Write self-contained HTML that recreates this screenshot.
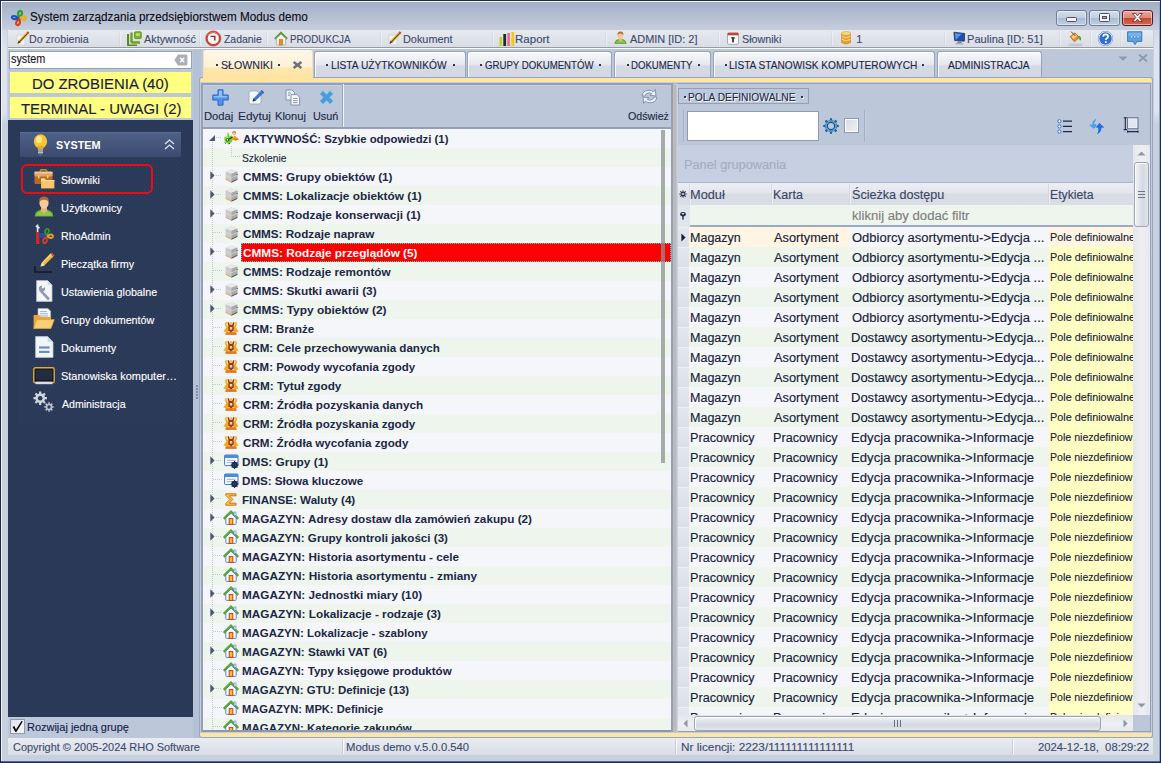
<!DOCTYPE html>
<html><head><meta charset="utf-8"><title>Modus demo</title>
<style>
html,body{margin:0;padding:0}
body{width:1161px;height:763px;position:relative;overflow:hidden;background:#c4cddc;font-family:"Liberation Sans", sans-serif;font-size:11px}
div,span,svg{box-sizing:border-box}
span{-webkit-text-stroke:0.12px}
</style></head><body>
<div style="position:absolute;left:0px;top:0px;width:1161px;height:763px;background:#1d2b4a"></div>
<div style="position:absolute;left:1px;top:1px;width:1159px;height:760px;background:#c8d0de"></div>
<div style="position:absolute;left:1px;top:1px;width:1159px;height:1px;background:#f4f6fa"></div>
<div style="position:absolute;left:1px;top:1px;width:1px;height:760px;background:#f4f6fa"></div>
<div style="position:absolute;left:2px;top:2px;width:1158px;height:759px;background:#c8d0de"></div>
<div style="position:absolute;left:1159px;top:2px;width:1px;height:759px;background:#93a3c2"></div>
<div style="position:absolute;left:2px;top:2px;width:1157px;height:28px;background:linear-gradient(#a3afc7,#c6cfdd)"></div>
<div style="position:absolute;left:8px;top:49px;width:1145px;height:689px;background:#bcc8da"></div>
<div style="position:absolute;left:2px;top:30px;width:5px;height:95px;background:linear-gradient(#d4dae5,#dfe3ec 20%,#dfe3ec 85%,#c9d0de)"></div>
<div style="position:absolute;left:1154px;top:30px;width:5px;height:95px;background:linear-gradient(#d4dae5,#dfe3ec 20%,#dfe3ec 85%,#c9d0de)"></div>
<svg style="position:absolute;left:10px;top:9px;" width="18" height="18" viewBox="0 0 18 18">
<g fill="none" stroke-width="2.2" stroke-linecap="round">
<path d="M9 8 C6 2 12 0 12 4 C12 7 9 8 9 8" stroke="#2f9a2f"/>
<path d="M10 9 C16 5 18 11 14 11 C12 11 10 9 10 9" stroke="#e8b020"/>
<path d="M9 10 C12 16 6 18 6 14 C6 12 9 10 9 10" stroke="#d8401c"/>
<path d="M8 9 C2 12 0 7 4 7 C6 7 8 9 8 9" stroke="#2050c0"/>
</g></svg>
<span style="position:absolute;left:29.51px;top:10px;height:14px;line-height:14px;font-size:12px;color:#0a0a14;white-space:pre;display:inline-block;transform-origin:0 0;transform:scaleX(0.9779);">System zarządzania przedsiębiorstwem Modus demo</span>
<div style="position:absolute;left:1056px;top:10px;width:31px;height:16px;border:1px solid #6e7c97;border-radius:3px;background:linear-gradient(#d3deeb 0%,#c2d0e2 48%,#a9bcd4 52%,#c1d0e2 100%);box-shadow:inset 0 0 0 1px rgba(255,255,255,.45)"></div>
<div style="position:absolute;left:1089px;top:10px;width:31px;height:16px;border:1px solid #6e7c97;border-radius:3px;background:linear-gradient(#d3deeb 0%,#c2d0e2 48%,#a9bcd4 52%,#c1d0e2 100%);box-shadow:inset 0 0 0 1px rgba(255,255,255,.45)"></div>
<div style="position:absolute;left:1122px;top:10px;width:31px;height:16px;border:1px solid #5e1522;border-radius:3px;background:linear-gradient(#e9a79b 0%,#dc8a7b 48%,#c8452b 52%,#d26a50 100%);box-shadow:inset 0 0 0 1px rgba(255,255,255,.45)"></div>
<div style="position:absolute;left:1066px;top:17px;width:11px;height:5px;background:#f4f4f4;border:1px solid #4a4f66;border-radius:1.5px"></div>
<div style="position:absolute;left:1099px;top:13px;width:11px;height:9px;background:#f4f4f4;border:1px solid #4a4f66;border-radius:1.5px"></div>
<div style="position:absolute;left:1102px;top:16px;width:5px;height:3px;background:#9fb2cc;border:1px solid #4a4f66"></div>
<svg style="position:absolute;left:1131px;top:12px;" width="13" height="11" viewBox="0 0 13 11"><path d="M1.5 1.5 L4.6 1.5 L6.5 3.8 L8.4 1.5 L11.5 1.5 L8.2 5.5 L11.5 9.5 L8.4 9.5 L6.5 7.2 L4.6 9.5 L1.5 9.5 L4.8 5.5 Z" fill="#f6f6f6" stroke="#6a3a3a" stroke-width="0.9"/></svg>
<div style="position:absolute;left:8px;top:30px;width:1145px;height:17px;background:linear-gradient(#e6e9ee,#d9dde6)"></div>
<div style="position:absolute;left:8px;top:47px;width:1145px;height:1px;background:#9a9a9a"></div>
<div style="position:absolute;left:8px;top:48px;width:1145px;height:1px;background:#fbfbfc"></div>
<div style="position:absolute;left:120px;top:31px;width:1px;height:15px;background:rgba(255,255,255,.38)"></div>
<div style="position:absolute;left:119px;top:31px;width:1px;height:15px;background:rgba(180,188,204,.22)"></div>
<div style="position:absolute;left:200px;top:31px;width:1px;height:15px;background:rgba(255,255,255,.38)"></div>
<div style="position:absolute;left:199px;top:31px;width:1px;height:15px;background:rgba(180,188,204,.22)"></div>
<div style="position:absolute;left:267px;top:31px;width:1px;height:15px;background:rgba(255,255,255,.38)"></div>
<div style="position:absolute;left:266px;top:31px;width:1px;height:15px;background:rgba(180,188,204,.22)"></div>
<div style="position:absolute;left:381px;top:31px;width:1px;height:15px;background:rgba(255,255,255,.38)"></div>
<div style="position:absolute;left:380px;top:31px;width:1px;height:15px;background:rgba(180,188,204,.22)"></div>
<div style="position:absolute;left:493px;top:31px;width:1px;height:15px;background:rgba(255,255,255,.38)"></div>
<div style="position:absolute;left:492px;top:31px;width:1px;height:15px;background:rgba(180,188,204,.22)"></div>
<div style="position:absolute;left:606px;top:31px;width:1px;height:15px;background:rgba(255,255,255,.38)"></div>
<div style="position:absolute;left:605px;top:31px;width:1px;height:15px;background:rgba(180,188,204,.22)"></div>
<div style="position:absolute;left:719px;top:31px;width:1px;height:15px;background:rgba(255,255,255,.38)"></div>
<div style="position:absolute;left:718px;top:31px;width:1px;height:15px;background:rgba(180,188,204,.22)"></div>
<div style="position:absolute;left:832px;top:31px;width:1px;height:15px;background:rgba(255,255,255,.38)"></div>
<div style="position:absolute;left:831px;top:31px;width:1px;height:15px;background:rgba(180,188,204,.22)"></div>
<div style="position:absolute;left:945px;top:31px;width:1px;height:15px;background:rgba(255,255,255,.38)"></div>
<div style="position:absolute;left:944px;top:31px;width:1px;height:15px;background:rgba(180,188,204,.22)"></div>
<div style="position:absolute;left:1060px;top:31px;width:1px;height:15px;background:rgba(255,255,255,.38)"></div>
<div style="position:absolute;left:1059px;top:31px;width:1px;height:15px;background:rgba(180,188,204,.22)"></div>
<div style="position:absolute;left:1091px;top:31px;width:1px;height:15px;background:rgba(255,255,255,.38)"></div>
<div style="position:absolute;left:1090px;top:31px;width:1px;height:15px;background:rgba(180,188,204,.22)"></div>
<div style="position:absolute;left:1121px;top:31px;width:1px;height:15px;background:rgba(255,255,255,.38)"></div>
<div style="position:absolute;left:1120px;top:31px;width:1px;height:15px;background:rgba(180,188,204,.22)"></div>
<span style="position:absolute;left:29.04px;top:33px;height:12px;line-height:12px;font-size:11px;color:#3d4a6c;white-space:pre;display:inline-block;transform-origin:0 0;transform:scaleX(0.9646);">Do zrobienia</span>
<span style="position:absolute;left:143.5px;top:33px;height:12px;line-height:12px;font-size:11px;color:#3d4a6c;white-space:pre;display:inline-block;transform-origin:0 0;transform:scaleX(0.9856);">Aktywność</span>
<span style="position:absolute;left:223.76px;top:33px;height:12px;line-height:12px;font-size:11px;color:#3d4a6c;white-space:pre;display:inline-block;transform-origin:0 0;transform:scaleX(0.9487);">Zadanie</span>
<span style="position:absolute;left:289.61px;top:33px;height:12px;line-height:12px;font-size:11px;color:#3d4a6c;white-space:pre;display:inline-block;transform-origin:0 0;transform:scaleX(0.8914);">PRODUKCJA</span>
<span style="position:absolute;left:402.51px;top:33px;height:12px;line-height:12px;font-size:11px;color:#3d4a6c;white-space:pre;display:inline-block;transform-origin:0 0;transform:scaleX(0.9898);">Dokument</span>
<span style="position:absolute;left:515.45px;top:33px;height:12px;line-height:12px;font-size:11px;color:#3d4a6c;white-space:pre;display:inline-block;transform-origin:0 0;transform:scaleX(1.0469);">Raport</span>
<span style="position:absolute;left:630.0px;top:33px;height:12px;line-height:12px;font-size:11px;color:#3d4a6c;white-space:pre;display:inline-block;transform-origin:0 0;transform:scaleX(0.9940);">ADMIN [ID: 2]</span>
<span style="position:absolute;left:742.01px;top:33px;height:12px;line-height:12px;font-size:11px;color:#3d4a6c;white-space:pre;display:inline-block;transform-origin:0 0;transform:scaleX(0.9744);">Słowniki</span>
<span style="position:absolute;left:856.25px;top:33px;height:12px;line-height:12px;font-size:11px;color:#3d4a6c;white-space:pre;">1</span>
<span style="position:absolute;left:967.49px;top:33px;height:12px;line-height:12px;font-size:11px;color:#3d4a6c;white-space:pre;display:inline-block;transform-origin:0 0;transform:scaleX(1.0068);">Paulina [ID: 51]</span>
<svg style="position:absolute;left:16px;top:31px;" width="14" height="15" viewBox="0 0 14 15">
<path d="M1 4 L9 4 L9 14 L4 14 L1 11 Z" fill="#f3f3f3" stroke="#c9c9c9" stroke-width=".6"/>
<path d="M1.5 12.8 L2.6 9.6 L10.6 1.2 L12.6 3 L4.6 11.6 Z" fill="#e8b42a"/>
<path d="M3.4 10.4 L11.4 2 L12 2.6 L4 11 Z" fill="#3a3020"/>
<path d="M10.6 1.2 L11.8 0.2 L13.4 1.8 L12.6 3 Z" fill="#d03a2a"/>
<path d="M1.5 12.8 L2.6 9.6 L4.6 11.6 Z" fill="#4a3a2a"/></svg>
<svg style="position:absolute;left:388px;top:31px;" width="14" height="15" viewBox="0 0 14 15">
<path d="M1 4 L9 4 L9 14 L4 14 L1 11 Z" fill="#f3f3f3" stroke="#c9c9c9" stroke-width=".6"/>
<path d="M1.5 12.8 L2.6 9.6 L10.6 1.2 L12.6 3 L4.6 11.6 Z" fill="#e8b42a"/>
<path d="M3.4 10.4 L11.4 2 L12 2.6 L4 11 Z" fill="#3a3020"/>
<path d="M10.6 1.2 L11.8 0.2 L13.4 1.8 L12.6 3 Z" fill="#d03a2a"/>
<path d="M1.5 12.8 L2.6 9.6 L4.6 11.6 Z" fill="#4a3a2a"/></svg>
<svg style="position:absolute;left:127px;top:31px;" width="15" height="15" viewBox="0 0 15 15">
<path d="M1 3 L1 13.5 Q1 14.5 2 14.5 L10 14.5" fill="none" stroke="#5b8a1c" stroke-width="2.2"/>
<path d="M4.5 1.5 L4.5 10.5 Q4.5 11.5 5.5 11.5 L13 11.5" fill="none" stroke="#6fa024" stroke-width="2.4"/>
<rect x="7.5" y="0.8" width="6.8" height="6.8" rx="1.2" fill="#7db32c" stroke="#5b8a1c" stroke-width=".8"/>
<rect x="8.8" y="2" width="4.2" height="3" rx=".8" fill="#b3dc6a"/></svg>
<svg style="position:absolute;left:205px;top:30px;" width="17" height="17" viewBox="0 0 17 17">
<circle cx="8.3" cy="8.5" r="6.6" fill="#fdf6f4" stroke="#cf4034" stroke-width="2"/>
<circle cx="8.3" cy="8.5" r="7.6" fill="none" stroke="#a8322a" stroke-width=".5"/>
<path d="M2.6 5.4 Q8.3 -1 14 5.4" fill="none" stroke="#e88a80" stroke-width=".9"/>
<path d="M5.6 6.4 L9.8 6.4 L9.8 10.6" fill="none" stroke="#8a2a24" stroke-width="1.4"/></svg>
<svg style="position:absolute;left:274px;top:31px;" width="14" height="15" viewBox="0 0 14 15">
<path d="M7 0.8 L0.6 7.2 L1.8 8.2 L7 3.2 L12.2 8.2 L13.4 7.2 Z" fill="#5aa02c" stroke="#3f7a1c" stroke-width=".6"/>
<path d="M2.4 7.4 L7 3.2 L11.6 7.4 L11.6 14 L2.4 14 Z" fill="#f4f1ea" stroke="#a8a49a" stroke-width=".7"/>
<rect x="5.4" y="8.4" width="3.2" height="5.6" fill="#f08a1c" stroke="#c0600c" stroke-width=".5"/></svg>
<svg style="position:absolute;left:499px;top:32px;" width="16" height="14" viewBox="0 0 16 14">
<rect x="0.5" y="5" width="2.6" height="9" fill="#c6cf1c"/>
<rect x="4.3" y="2" width="2.8" height="12" fill="#1d2838"/>
<rect x="8.3" y="1" width="2.6" height="13" fill="#e8727a"/>
<rect x="12.4" y="0" width="2.8" height="14" fill="#f2c81c"/></svg>
<svg style="position:absolute;left:613.5px;top:31px;" width="13" height="13" viewBox="0 0 13 14">
<path d="M0.4 13.8 Q0.4 9 6.5 9 Q12.6 9 12.6 13.8 Z" fill="#6cae2e" stroke="#4a8a1c" stroke-width=".5"/><path d="M1.6 12.6 Q2.4 9.8 6.5 9.8 Q10.6 9.8 11.4 12.6 Z" fill="#9ad25a" opacity=".7"/>
<path d="M5 7.5 L8 7.5 L8.4 10 L6.5 11.2 L4.6 10 Z" fill="#e8b88a"/>
<ellipse cx="6.5" cy="4.6" rx="3" ry="3.6" fill="#f2c79a"/>
<path d="M3.3 4.4 Q3 0.6 6.5 0.6 Q10 0.6 9.7 4.4 Q8.6 2.4 6.5 2.6 Q4.4 2.4 3.3 4.4 Z" fill="#b0702c"/></svg>
<svg style="position:absolute;left:727px;top:32px;" width="12" height="13" viewBox="0 0 12 13">
<rect x="0.5" y="0.8" width="11" height="11.6" rx="1.5" fill="#fbfbfb" stroke="#9aa3b5" stroke-width=".9"/>
<path d="M0.6 0.9 h10.8 v2.4 h-10.8 z" fill="#d8392c"/>
<rect x="5.1" y="5.4" width="1.8" height="5" fill="#2a3248"/>
<rect x="4" y="5.4" width="4" height="1.1" fill="#2a3248"/></svg>
<svg style="position:absolute;left:841px;top:31px;" width="10.4" height="14" viewBox="0 0 11 15">
<path d="M0.6 2.6 L0.6 12.4 Q5.5 15.6 10.4 12.4 L10.4 2.6 Z" fill="#eaa12a" stroke="#b9761a" stroke-width=".6"/>
<ellipse cx="5.5" cy="2.6" rx="4.9" ry="2" fill="#f8d888" stroke="#c98a20" stroke-width=".5"/>
<path d="M0.8 5.8 Q5.5 8.6 10.2 5.8 M0.8 9 Q5.5 11.8 10.2 9" fill="none" stroke="#fbe4a8" stroke-width=".9"/></svg>
<svg style="position:absolute;left:953px;top:31px;" width="13" height="14.5" viewBox="0 0 14 15">
<path d="M1 1 L12.6 2.4 L12.2 10.6 L1.8 10 Z" fill="#1d4fb0" stroke="#243a66" stroke-width=".9"/>
<path d="M2 2 L9 3 L3 9.4 Z" fill="#6fa8ee" opacity=".8"/>
<path d="M5.4 10.6 L8.6 10.8 L9.6 13 L4 13 Z" fill="#7c8494"/>
<path d="M2.6 13 L11 13.2 L11 14.2 L2.6 14 Z" fill="#9aa2b2"/></svg>
<svg style="position:absolute;left:1068px;top:31px;" width="15" height="16" viewBox="0 0 15 16">
<path d="M2.2 5.8 L7 1.8 L11.4 6.4 L6.4 10.8 Z" fill="#e8912a" stroke="#a85a14" stroke-width=".7"/>
<path d="M3.6 5.8 L7 3 L9 5 L5.4 8 Z" fill="#fbd79a"/>
<path d="M3 0.6 L7.4 5" stroke="#8a3a1a" stroke-width="1"/>
<path d="M10.4 4.8 Q13.6 5.2 13 9.4 L11.4 9 Q11.8 6.8 10 6.2 Z" fill="#4aa028"/>
<rect x="0.6" y="12.6" width="13.8" height="2.6" fill="#c3c8d0"/></svg>
<svg style="position:absolute;left:1098px;top:31px;" width="15" height="15" viewBox="0 0 15 15">
<circle cx="7.5" cy="7.5" r="6.8" fill="#2f6fd6" stroke="#f2f5fb" stroke-width="1.1"/>
<circle cx="7.5" cy="7.5" r="7.3" fill="none" stroke="#4470b8" stroke-width=".5"/>
<path d="M5.2 5.8 Q5.2 3.4 7.6 3.4 Q10 3.4 10 5.4 Q10 6.8 8.6 7.4 Q7.8 7.8 7.8 9" fill="none" stroke="#fff" stroke-width="1.7"/>
<rect x="6.9" y="10.2" width="1.8" height="1.8" fill="#fff"/></svg>
<svg style="position:absolute;left:1127px;top:31px;" width="16" height="15" viewBox="0 0 16 15">
<path d="M0.6 0.8 L14.8 0.8 L14.8 10.4 L10 10.4 L8 13.6 L6 10.4 L0.6 10.4 Z" fill="#5ea2e2" stroke="#2f72c0" stroke-width=".9"/>
<path d="M1.4 1.6 L14 1.6 L14 5 L1.4 5 Z" fill="#86bdf0" opacity=".7"/>
<g fill="#dfeefc" stroke="#2a68b8" stroke-width=".5"><circle cx="4.6" cy="5.8" r="1.2"/><circle cx="7.8" cy="5.8" r="1.2"/><circle cx="11" cy="5.8" r="1.2"/></g></svg>
<div style="position:absolute;left:9px;top:51px;width:183px;height:18px;background:#fff;border:1px solid #95a1b8"></div>
<span style="position:absolute;left:10.55px;top:52px;height:14px;line-height:14px;font-size:12px;color:#14142a;white-space:pre;display:inline-block;transform-origin:0 0;transform:scaleX(0.8980);">system</span>
<svg style="position:absolute;left:174px;top:54px;" width="14" height="12" viewBox="0 0 14 12">
<path d="M4 0.6 L12.4 0.6 Q13.4 0.6 13.4 1.6 L13.4 10.4 Q13.4 11.4 12.4 11.4 L4 11.4 L0.4 6 Z" fill="#a9aeb8"/>
<path d="M6.2 3.8 L10.2 8.2 M10.2 3.8 L6.2 8.2" stroke="#fff" stroke-width="1.3"/></svg>
<div style="position:absolute;left:10px;top:72px;width:181px;height:21px;background:#ffff80"></div>
<div style="position:absolute;left:10px;top:97px;width:181px;height:21px;background:#ffff80"></div>
<span style="position:absolute;left:31.96px;top:75px;height:17px;line-height:17px;font-size:15px;color:#1a1a3a;white-space:pre;display:inline-block;transform-origin:0 0;transform:scaleX(0.9937);">DO ZROBIENIA (40)</span>
<span style="position:absolute;left:21.25px;top:100px;height:17px;line-height:17px;font-size:15px;color:#1a1a3a;white-space:pre;display:inline-block;transform-origin:0 0;transform:scaleX(0.9947);">TERMINAL - UWAGI (2)</span>
<div style="position:absolute;left:8px;top:120px;width:185px;height:597px;background:#2b3958"></div>
<div style="position:absolute;left:20px;top:157px;width:161px;height:268px;background:#2b3958;background-image:radial-gradient(circle at 0.5px 0.5px,#35455f 0.6px,transparent 0.9px),radial-gradient(circle at 2.5px 2.5px,#35455f 0.6px,transparent 0.9px);background-size:4px 4px"></div>
<div style="position:absolute;left:20px;top:132px;width:161px;height:25px;background:linear-gradient(#4f6088,#3b4b70);border-top:1px solid #5b6c93"></div>
<span style="position:absolute;left:55.75px;top:139px;height:12px;line-height:12px;font-size:11px;font-weight:bold;-webkit-text-stroke:0;color:#fff;white-space:pre;display:inline-block;transform-origin:0 0;transform:scaleX(0.9831);">SYSTEM</span>
<svg style="position:absolute;left:33px;top:134px;" width="15" height="22" viewBox="0 0 15 22">
<ellipse cx="7.5" cy="7.5" rx="6.6" ry="7.2" fill="#f8c534"/>
<ellipse cx="6" cy="5.5" rx="3" ry="3.6" fill="#fde98a"/>
<path d="M4 12 L11 12 L10 15.5 L5 15.5 Z" fill="#eaa826"/>
<rect x="5" y="15.5" width="5" height="4" fill="#b8bcc4"/>
<rect x="5" y="16.6" width="5" height="1" fill="#7c828e"/>
<path d="M5.6 19.5 L9.4 19.5 L8.4 21.4 L6.6 21.4 Z" fill="#6a6e78"/></svg>
<svg style="position:absolute;left:164px;top:139px;" width="11" height="11" viewBox="0 0 11 11"><path d="M1 5 L5.5 1 L10 5 M1 10 L5.5 6 L10 10" fill="none" stroke="#dfe4ee" stroke-width="1.3"/></svg>
<div style="position:absolute;left:21px;top:164px;width:132px;height:30px;border:2px solid #f00a14;border-radius:6px"></div>
<span style="position:absolute;left:61.02px;top:174px;height:12px;line-height:12px;font-size:11px;color:#fff;white-space:pre;display:inline-block;transform-origin:0 0;transform:scaleX(0.9615);">Słowniki</span>
<span style="position:absolute;left:60.75px;top:202px;height:12px;line-height:12px;font-size:11px;color:#fff;white-space:pre;display:inline-block;transform-origin:0 0;transform:scaleX(0.9959);">Użytkownicy</span>
<span style="position:absolute;left:60.54px;top:230px;height:12px;line-height:12px;font-size:11px;color:#fff;white-space:pre;display:inline-block;transform-origin:0 0;transform:scaleX(0.9648);">RhoAdmin</span>
<span style="position:absolute;left:60.52px;top:258px;height:12px;line-height:12px;font-size:11px;color:#fff;white-space:pre;display:inline-block;transform-origin:0 0;transform:scaleX(0.9796);">Pieczątka firmy</span>
<span style="position:absolute;left:60.77px;top:286px;height:12px;line-height:12px;font-size:11px;color:#fff;white-space:pre;display:inline-block;transform-origin:0 0;transform:scaleX(0.9769);">Ustawienia globalne</span>
<span style="position:absolute;left:61.01px;top:314px;height:12px;line-height:12px;font-size:11px;color:#fff;white-space:pre;display:inline-block;transform-origin:0 0;transform:scaleX(0.9789);">Grupy dokumentów</span>
<span style="position:absolute;left:60.51px;top:342px;height:12px;line-height:12px;font-size:11px;color:#fff;white-space:pre;display:inline-block;transform-origin:0 0;transform:scaleX(0.9908);">Dokumenty</span>
<span style="position:absolute;left:61.0px;top:370px;height:12px;line-height:12px;font-size:11px;color:#fff;white-space:pre;display:inline-block;transform-origin:0 0;transform:scaleX(0.9978);">Stanowiska komputer…</span>
<span style="position:absolute;left:61.5px;top:398px;height:12px;line-height:12px;font-size:11px;color:#fff;white-space:pre;display:inline-block;transform-origin:0 0;transform:scaleX(0.9621);">Administracja</span>
<svg style="position:absolute;left:34px;top:169px;" width="21" height="20" viewBox="0 0 21 20">
<path d="M6 3 Q6 0.8 8 0.8 L11 0.8 Q13 0.8 13 3" fill="none" stroke="#c88a4a" stroke-width="1.4"/>
<rect x="0.5" y="2.6" width="18" height="12.4" rx="1" fill="#b9692c"/>
<rect x="0.5" y="2.6" width="18" height="5" rx="1" fill="#dfa468"/>
<rect x="0.5" y="3" width="18" height="1.6" fill="#f0c896"/>
<rect x="4" y="6.4" width="1.4" height="3" fill="#ffd84a"/><rect x="13" y="6.4" width="1.4" height="3" fill="#ffd84a"/>
<path d="M7 9.6 L11 9.6 L11.6 11 L20.4 11 L20.4 19.6 L7 19.6 Z" fill="#eeb04a"/>
<path d="M7 9.6 L11 9.6 L11.6 11 L20.4 11 L20.4 12.4 L7 12.4 Z" fill="#fbe09a"/>
<rect x="7.6" y="13" width="12.2" height="6" fill="#f6c868"/></svg>
<svg style="position:absolute;left:34px;top:196px;" width="20" height="21" viewBox="0 0 20 21">
<path d="M0.6 20.4 Q0.6 13.6 10 13.6 Q19.4 13.6 19.4 20.4 Z" fill="#6aac2c"/>
<path d="M2 19.8 Q3 15 10 14.6 Q17 15 18 19.8 Z" fill="#8cc84a"/>
<path d="M7.4 11 L12.6 11 L13.4 15 L10 17 L6.6 15 Z" fill="#e8b482"/>
<ellipse cx="10" cy="7" rx="4.6" ry="5.6" fill="#f4c99c"/>
<path d="M5.2 7 Q4.4 0.6 10 0.6 Q15.6 0.6 14.8 7 Q13.6 3.6 10 3.8 Q6.4 3.6 5.2 7 Z" fill="#b06c2a"/></svg>
<svg style="position:absolute;left:35px;top:224px;" width="20" height="22" viewBox="0 0 20 22">
<rect x="1" y="8" width="3.4" height="12" fill="#d02828"/>
<path d="M2.6 0.6 L2.6 8 M0.8 2 L4.6 4" stroke="#e8e8e8" stroke-width="1.6"/>
<g fill="none" stroke-width="1.8">
<path d="M11 11 C8 5 14 3 14 7 C14 9 11 11 11 11" stroke="#2f9a2f"/>
<path d="M12 12 C18 8 20 14 16 14 C14 14 12 12 12 12" stroke="#e8a020"/>
<path d="M11 13 C14 19 8 21 8 17 C8 15 11 13 11 13" stroke="#d8401c"/>
<path d="M10 12 C4 15 4 10 7 10 C9 10 10 12 10 12" stroke="#2050c0"/></g></svg>
<svg style="position:absolute;left:34px;top:252px;" width="21" height="22" viewBox="0 0 21 22">
<path d="M1 14 L1 20 L18 20" fill="none" stroke="#1a1a22" stroke-width="1.6"/>
<path d="M6 15 L8 10.4 L16.6 1.6 L19.4 4.4 L10.6 13.2 Z" fill="#f0b83a"/>
<path d="M8 10.4 L16.6 1.6 L17.6 2.6 L9 11.4 Z" fill="#f8d878"/>
<path d="M16.6 1.6 L17.8 0.4 L20.6 3.2 L19.4 4.4 Z" fill="#d84a4a"/>
<path d="M6 15 L8 10.4 L10.6 13.2 Z" fill="#f4e2c0"/><path d="M6 15 L6.8 13.2 L7.8 14.2 Z" fill="#222"/></svg>
<svg style="position:absolute;left:36px;top:280px;" width="18" height="22" viewBox="0 0 18 22">
<path d="M0.6 0.6 L11.6 0.6 L16 5 L16 21.4 L0.6 21.4 Z" fill="#f4f6fa" stroke="#b4bccb" stroke-width=".8"/>
<path d="M11.6 0.6 L11.6 5 L16 5 Z" fill="#d2d9e6"/>
<path d="M3.4 9.6 Q2.6 6.6 5.6 5.8 L5.2 8 L7 9 L8.6 7.6 Q9.6 10.4 6.8 11.4 L13.6 18.4 L12 20 L5.2 12.6 Q4 12 3.4 9.6 Z" fill="#8f9cb2" stroke="#6a7890" stroke-width=".5"/></svg>
<svg style="position:absolute;left:33px;top:308px;" width="22" height="21" viewBox="0 0 22 21">
<path d="M5 0.6 L15 0.6 L17.6 3.2 L17.6 12 L5 12 Z" fill="#f6f8fb" stroke="#a8b2c4" stroke-width=".7"/>
<path d="M7 3.6 h7 M7 5.8 h8 M7 8 h8" stroke="#9fb0cc" stroke-width="1"/>
<path d="M0.6 7 L6.4 7 L7.8 9 L18 9 L18 20.4 L0.6 20.4 Z" fill="#e9a53a"/>
<path d="M3.6 11.6 L21.4 11.6 L18 20.4 L0.6 20.4 Z" fill="#f8cf72" stroke="#d99a2a" stroke-width=".6"/></svg>
<svg style="position:absolute;left:35px;top:336px;" width="19" height="22" viewBox="0 0 19 22">
<path d="M0.6 0.6 L12.6 0.6 L18 6 L18 21.4 L0.6 21.4 Z" fill="#f2f5fa" stroke="#b8c2d2" stroke-width=".8"/>
<path d="M12.6 0.6 L12.6 6 L18 6 Z" fill="#cfd8e6"/>
<rect x="4" y="10.4" width="10.6" height="2.2" fill="#6c8cc0"/><rect x="4" y="14.8" width="10.6" height="2.2" fill="#6c8cc0"/></svg>
<svg style="position:absolute;left:33px;top:367px;" width="22" height="18" viewBox="0 0 22 18">
<rect x="0.8" y="0.8" width="20.4" height="15" rx="1.6" fill="#10161f" stroke="#e8a83a" stroke-width="1.4"/>
<rect x="2.6" y="2.6" width="16.8" height="10.4" fill="#222c3c"/>
<rect x="2.6" y="14.6" width="16.8" height="2.6" fill="#d8dde6"/></svg>
<svg style="position:absolute;left:33px;top:391px;" width="22" height="22" viewBox="0 0 22 22"><path d="M13.91 6.12 L13.91 8.28 L11.96 8.33 L11.37 9.77 L12.71 11.18 L11.18 12.71 L9.77 11.37 L8.33 11.96 L8.28 13.91 L6.12 13.91 L6.07 11.96 L4.63 11.37 L3.22 12.71 L1.69 11.18 L3.03 9.77 L2.44 8.33 L0.49 8.28 L0.49 6.12 L2.44 6.07 L3.03 4.63 L1.69 3.22 L3.22 1.69 L4.63 3.03 L6.07 2.44 L6.12 0.49 L8.28 0.49 L8.33 2.44 L9.77 3.03 L11.18 1.69 L12.71 3.22 L11.37 4.63 L11.96 6.07 Z" fill="#cfd4dd"/><circle cx="7.2" cy="7.2" r="2.31" fill="#2b3958"/><path d="M20.74 15.24 L20.74 16.76 L19.36 16.80 L18.94 17.81 L19.89 18.81 L18.81 19.89 L17.81 18.94 L16.80 19.36 L16.76 20.74 L15.24 20.74 L15.20 19.36 L14.19 18.94 L13.19 19.89 L12.11 18.81 L13.06 17.81 L12.64 16.80 L11.26 16.76 L11.26 15.24 L12.64 15.20 L13.06 14.19 L12.11 13.19 L13.19 12.11 L14.19 13.06 L15.20 12.64 L15.24 11.26 L16.76 11.26 L16.80 12.64 L17.81 13.06 L18.81 12.11 L19.89 13.19 L18.94 14.19 L19.36 15.20 Z" fill="#b9c0cc"/><circle cx="16" cy="16" r="1.63" fill="#2b3958"/></svg>
<div style="position:absolute;left:10px;top:719px;width:15px;height:15px;background:linear-gradient(135deg,#dfe3ea,#f6f7fa);border:1px solid #8e99ad"></div>
<svg style="position:absolute;left:11px;top:720px;" width="13" height="13" viewBox="0 0 13 13"><path d="M1.6 7 L3.4 6 L5 9.4 L10.4 1 L11.8 1.6 L5.4 12 L4.4 12 Z" fill="#0a0a0a"/></svg>
<span style="position:absolute;left:26.5px;top:721px;height:12px;line-height:12px;font-size:11px;color:#14204a;white-space:pre;display:inline-block;transform-origin:0 0;transform:scaleX(0.9975);">Rozwijaj jedną grupę</span>
<div style="position:absolute;left:193px;top:49px;width:8px;height:689px;background:#b5c1d5"></div>
<div style="position:absolute;left:196px;top:385px;width:2px;height:2px;background:#7e8ca6"></div>
<div style="position:absolute;left:196px;top:388px;width:2px;height:2px;background:#7e8ca6"></div>
<div style="position:absolute;left:196px;top:391px;width:2px;height:2px;background:#7e8ca6"></div>
<div style="position:absolute;left:196px;top:394px;width:2px;height:2px;background:#7e8ca6"></div>
<div style="position:absolute;left:196px;top:397px;width:2px;height:2px;background:#7e8ca6"></div>
<div style="position:absolute;left:203px;top:49px;width:110px;height:30px;background:linear-gradient(#fdf7ea 0%,#fdf1d6 58%,#fde7b1 62%,#fde39f 100%);border:1px solid #f0dfb8;border-top-color:#b9c1cf;border-bottom:none;border-radius:3px 3px 0 0"></div>
<span style="position:absolute;left:221.12px;top:59px;height:12px;line-height:12px;font-size:11px;color:#1c2746;white-space:pre;display:inline-block;transform-origin:0 0;transform:scaleX(0.9646);">SŁOWNIKI</span>
<div style="position:absolute;left:216px;top:64px;width:2px;height:2px;background:#2a3350"></div>
<div style="position:absolute;left:278px;top:64px;width:2px;height:2px;background:#2a3350"></div>
<svg style="position:absolute;left:292px;top:61px;" width="11" height="8" viewBox="0 0 11 8"><path d="M1.6 1 L9.4 7 M9.4 1 L1.6 7" stroke="#6b7080" stroke-width="2.5"/></svg>
<div style="position:absolute;left:314px;top:51px;width:152px;height:27px;background:linear-gradient(#f8f9fb 0%,#e4e7ee 48%,#d4d9e4 54%,#d3d9e4 100%);border:1px solid #97a3b9;border-bottom:none;border-radius:3px 3px 0 0;box-shadow:inset 1px 1px 0 rgba(255,255,255,.8)"></div>
<span style="position:absolute;left:330.67px;top:59px;height:12px;line-height:12px;font-size:11px;color:#1c2746;white-space:pre;display:inline-block;transform-origin:0 0;transform:scaleX(0.9282);">LISTA UŻYTKOWNIKÓW</span>
<div style="position:absolute;left:326px;top:64px;width:2px;height:2px;background:#2a3350"></div>
<div style="position:absolute;left:453px;top:64px;width:2px;height:2px;background:#2a3350"></div>
<div style="position:absolute;left:467px;top:51px;width:145px;height:27px;background:linear-gradient(#f8f9fb 0%,#e4e7ee 48%,#d4d9e4 54%,#d3d9e4 100%);border:1px solid #97a3b9;border-bottom:none;border-radius:3px 3px 0 0;box-shadow:inset 1px 1px 0 rgba(255,255,255,.8)"></div>
<span style="position:absolute;left:484.56px;top:59px;height:12px;line-height:12px;font-size:11px;color:#1c2746;white-space:pre;display:inline-block;transform-origin:0 0;transform:scaleX(0.8763);">GRUPY DOKUMENTÓW</span>
<div style="position:absolute;left:480px;top:64px;width:2px;height:2px;background:#2a3350"></div>
<div style="position:absolute;left:599px;top:64px;width:2px;height:2px;background:#2a3350"></div>
<div style="position:absolute;left:614px;top:51px;width:97px;height:27px;background:linear-gradient(#f8f9fb 0%,#e4e7ee 48%,#d4d9e4 54%,#d3d9e4 100%);border:1px solid #97a3b9;border-bottom:none;border-radius:3px 3px 0 0;box-shadow:inset 1px 1px 0 rgba(255,255,255,.8)"></div>
<span style="position:absolute;left:630.72px;top:59px;height:12px;line-height:12px;font-size:11px;color:#1c2746;white-space:pre;display:inline-block;transform-origin:0 0;transform:scaleX(0.8754);">DOKUMENTY</span>
<div style="position:absolute;left:627px;top:64px;width:2px;height:2px;background:#2a3350"></div>
<div style="position:absolute;left:698px;top:64px;width:2px;height:2px;background:#2a3350"></div>
<div style="position:absolute;left:713px;top:51px;width:222px;height:27px;background:linear-gradient(#f8f9fb 0%,#e4e7ee 48%,#d4d9e4 54%,#d3d9e4 100%);border:1px solid #97a3b9;border-bottom:none;border-radius:3px 3px 0 0;box-shadow:inset 1px 1px 0 rgba(255,255,255,.8)"></div>
<span style="position:absolute;left:729.08px;top:59px;height:12px;line-height:12px;font-size:11px;color:#1c2746;white-space:pre;display:inline-block;transform-origin:0 0;transform:scaleX(0.9192);">LISTA STANOWISK KOMPUTEROWYCH</span>
<div style="position:absolute;left:725px;top:64px;width:2px;height:2px;background:#2a3350"></div>
<div style="position:absolute;left:922px;top:64px;width:2px;height:2px;background:#2a3350"></div>
<div style="position:absolute;left:937px;top:51px;width:104.5px;height:27px;background:linear-gradient(#f8f9fb 0%,#e4e7ee 48%,#d4d9e4 54%,#d3d9e4 100%);border:1px solid #97a3b9;border-bottom:none;border-radius:3px 3px 0 0;box-shadow:inset 1px 1px 0 rgba(255,255,255,.8)"></div>
<span style="position:absolute;left:948.0px;top:59px;height:12px;line-height:12px;font-size:11px;color:#1c2746;white-space:pre;display:inline-block;transform-origin:0 0;transform:scaleX(0.9209);">ADMINISTRACJA</span>
<svg style="position:absolute;left:1118px;top:56px;" width="10" height="5" viewBox="0 0 10 5"><path d="M0.5 0.5 L9.5 0.5 L5 4.8 Z" fill="#8d99b3"/></svg>
<svg style="position:absolute;left:1138px;top:54px;" width="10" height="8" viewBox="0 0 10 8"><path d="M1 0.6 L9 7.4 M9 0.6 L1 7.4" stroke="#8d99b3" stroke-width="2"/></svg>
<div style="position:absolute;left:199px;top:77px;width:954px;height:661px;background:#98a5c0;border-radius:3px"></div>
<div style="position:absolute;left:200px;top:78px;width:952px;height:659px;background:#fee5a2;border-radius:2px"></div>
<div style="position:absolute;left:203px;top:77px;width:110px;height:2px;background:#fde39f"></div>
<div style="position:absolute;left:200px;top:82px;width:952px;height:651px;background:#c4cddc"></div>
<div style="position:absolute;left:201px;top:83px;width:472px;height:649px;background:#93a0b8"></div>
<div style="position:absolute;left:203px;top:85px;width:468px;height:645px;background:#c6cfde"></div>
<div style="position:absolute;left:204px;top:86px;width:467px;height:644px;background:#bcc8da"></div>
<div style="position:absolute;left:673px;top:83px;width:3px;height:649px;background:#bababa"></div>
<div style="position:absolute;left:676px;top:83px;width:1px;height:649px;background:#c2c4ca"></div>
<div style="position:absolute;left:677px;top:83px;width:474px;height:649px;background:#93a0b8"></div>
<div style="position:absolute;left:677px;top:84px;width:1px;height:648px;background:#cbd3e0"></div>
<div style="position:absolute;left:678px;top:84px;width:472px;height:647px;background:#bcc8da"></div>
<div style="position:absolute;left:203px;top:127px;width:468px;height:2px;background:#93a0b8"></div>
<div style="position:absolute;left:342px;top:84px;width:1px;height:43px;background:#98a5bc"></div>
<div style="position:absolute;left:343px;top:84px;width:1px;height:43px;background:#f2f4f8"></div>
<span style="position:absolute;left:204.48px;top:110px;height:12px;line-height:12px;font-size:11px;color:#1c2746;white-space:pre;display:inline-block;transform-origin:0 0;transform:scaleX(1.0185);">Dodaj</span>
<span style="position:absolute;left:238.42px;top:110px;height:12px;line-height:12px;font-size:11px;color:#1c2746;white-space:pre;display:inline-block;transform-origin:0 0;transform:scaleX(1.0783);">Edytuj</span>
<span style="position:absolute;left:275.49px;top:110px;height:12px;line-height:12px;font-size:11px;color:#1c2746;white-space:pre;display:inline-block;transform-origin:0 0;transform:scaleX(1.0087);">Klonuj</span>
<span style="position:absolute;left:312.76px;top:110px;height:12px;line-height:12px;font-size:11px;color:#1c2746;white-space:pre;display:inline-block;transform-origin:0 0;transform:scaleX(0.9897);">Usuń</span>
<span style="position:absolute;left:628.02px;top:110px;height:12px;line-height:12px;font-size:11px;color:#1c2746;white-space:pre;display:inline-block;transform-origin:0 0;transform:scaleX(0.9697);">Odśwież</span>
<svg style="position:absolute;left:212px;top:89px;" width="17" height="17" viewBox="0 0 17 17"><path d="M6 0.8 L11 0.8 L11 6 L16.2 6 L16.2 11 L11 11 L11 16.2 L6 16.2 L6 11 L0.8 11 L0.8 6 L6 6 Z" fill="#4f93ea" stroke="#2566d0" stroke-width="1"/><path d="M7 1.8 L10 1.8 L10 7 L15.2 7 L15.2 8.4 L1.8 8.4 L1.8 7 L7 7 Z" fill="#9cc6f8" opacity=".85"/></svg>
<svg style="position:absolute;left:248px;top:89px;" width="17" height="17" viewBox="0 0 17 17"><path d="M1 4 Q1 2 3 2 L9 2 L13 6 L13 13 Q13 15 11 15 L3 15 Q1 15 1 13 Z" fill="#f7f8fa" stroke="#9aa4b6" stroke-width=".8"/>
<path d="M4.6 12.6 L5.4 9.6 L12.8 2 L15.2 4.4 L7.6 11.8 Z" fill="#3c78cc"/><path d="M4.6 12.6 L5.4 9.6 L7.6 11.8 Z" fill="#20283a"/><path d="M12.8 2 L13.8 1 L16.2 3.4 L15.2 4.4 Z" fill="#2a5298"/></svg>
<svg style="position:absolute;left:285px;top:89px;" width="16" height="17" viewBox="0 0 16 17"><path d="M1 1 L7 1 L9.6 3.6 L9.6 11 L1 11 Z" fill="#eef1f6" stroke="#7d8aa2" stroke-width=".9"/>
<path d="M6 5.6 L12 5.6 L14.6 8.2 L14.6 16 L6 16 Z" fill="#f8f9fb" stroke="#7d8aa2" stroke-width=".9"/>
<path d="M8 9.4 h4.6 M8 11.6 h4.6 M8 13.6 h4.6 M3 4 h3 M3 6.2 h2" stroke="#7d8aa2" stroke-width=".9"/></svg>
<svg style="position:absolute;left:319px;top:90px;" width="15" height="15" viewBox="0 0 15 15"><path d="M0.8 4 L4 0.8 L7.5 4.4 L11 0.8 L14.2 4 L10.6 7.5 L14.2 11 L11 14.2 L7.5 10.6 L4 14.2 L0.8 11 L4.4 7.5 Z" fill="#4a9cd8" stroke="#7fc0ec" stroke-width=".7"/></svg>
<svg style="position:absolute;left:641px;top:88px;" width="17" height="17" viewBox="0 0 17 17"><g stroke="#8592ac" stroke-width="1" fill="#eef1f7" stroke-linejoin="round">
<path d="M1.2 8 Q1.6 2.4 8 2.2 Q10.8 2.2 12.6 3.8 L14.4 1.6 L15 8 L9 7.4 L10.8 5.6 Q9.4 4.8 8 4.9 Q4.4 5 4 8 Z"/>
<path d="M15.8 9 Q15.4 14.6 9 14.8 Q6.2 14.8 4.4 13.2 L2.6 15.4 L2 9 L8 9.6 L6.2 11.4 Q7.6 12.2 9 12.1 Q12.6 12 13 9 Z"/></g></svg>
<div style="position:absolute;left:203px;top:129px;width:468px;height:601px;overflow:hidden;background:#f5f6f9">
<div style="position:absolute;left:0px;top:0px;width:468px;height:19px;background:#f5f6f9"></div>
<div style="position:absolute;left:0px;top:19px;width:468px;height:19px;background:#edf5ec"></div>
<div style="position:absolute;left:0px;top:38px;width:468px;height:19px;background:#f5f6f9"></div>
<div style="position:absolute;left:0px;top:57px;width:468px;height:19px;background:#edf5ec"></div>
<div style="position:absolute;left:0px;top:76px;width:468px;height:19px;background:#f5f6f9"></div>
<div style="position:absolute;left:0px;top:95px;width:468px;height:19px;background:#edf5ec"></div>
<div style="position:absolute;left:0px;top:114px;width:468px;height:19px;background:#f5f6f9"></div>
<div style="position:absolute;left:0px;top:133px;width:468px;height:19px;background:#edf5ec"></div>
<div style="position:absolute;left:0px;top:152px;width:468px;height:19px;background:#f5f6f9"></div>
<div style="position:absolute;left:0px;top:171px;width:468px;height:19px;background:#edf5ec"></div>
<div style="position:absolute;left:0px;top:190px;width:468px;height:19px;background:#f5f6f9"></div>
<div style="position:absolute;left:0px;top:209px;width:468px;height:19px;background:#edf5ec"></div>
<div style="position:absolute;left:0px;top:228px;width:468px;height:19px;background:#f5f6f9"></div>
<div style="position:absolute;left:0px;top:247px;width:468px;height:19px;background:#edf5ec"></div>
<div style="position:absolute;left:0px;top:266px;width:468px;height:19px;background:#f5f6f9"></div>
<div style="position:absolute;left:0px;top:285px;width:468px;height:19px;background:#edf5ec"></div>
<div style="position:absolute;left:0px;top:304px;width:468px;height:19px;background:#f5f6f9"></div>
<div style="position:absolute;left:0px;top:323px;width:468px;height:19px;background:#edf5ec"></div>
<div style="position:absolute;left:0px;top:342px;width:468px;height:19px;background:#f5f6f9"></div>
<div style="position:absolute;left:0px;top:361px;width:468px;height:19px;background:#edf5ec"></div>
<div style="position:absolute;left:0px;top:380px;width:468px;height:19px;background:#f5f6f9"></div>
<div style="position:absolute;left:0px;top:399px;width:468px;height:19px;background:#edf5ec"></div>
<div style="position:absolute;left:0px;top:418px;width:468px;height:19px;background:#f5f6f9"></div>
<div style="position:absolute;left:0px;top:437px;width:468px;height:19px;background:#edf5ec"></div>
<div style="position:absolute;left:0px;top:456px;width:468px;height:19px;background:#f5f6f9"></div>
<div style="position:absolute;left:0px;top:475px;width:468px;height:19px;background:#edf5ec"></div>
<div style="position:absolute;left:0px;top:494px;width:468px;height:19px;background:#f5f6f9"></div>
<div style="position:absolute;left:0px;top:513px;width:468px;height:19px;background:#edf5ec"></div>
<div style="position:absolute;left:0px;top:532px;width:468px;height:19px;background:#f5f6f9"></div>
<div style="position:absolute;left:0px;top:551px;width:468px;height:19px;background:#edf5ec"></div>
<div style="position:absolute;left:0px;top:570px;width:468px;height:19px;background:#f5f6f9"></div>
<div style="position:absolute;left:0px;top:589px;width:468px;height:19px;background:#edf5ec"></div>
<div style="position:absolute;left:9px;top:13px;width:1px;height:601px;background:repeating-linear-gradient(#c2c8d6 0 1px,transparent 1px 2px)"></div>
<div style="position:absolute;left:13px;top:8px;width:6px;height:1px;background:repeating-linear-gradient(90deg,#c2c8d6 0 1px,transparent 1px 2px)"></div>
<svg style="position:absolute;left:6px;top:6px;" width="6" height="6" viewBox="0 0 6 6"><path d="M6 0 L6 6 L0 6 Z" fill="#4a5876"/></svg>
<svg style="position:absolute;left:20px;top:1px;" width="17" height="15" viewBox="0 0 17 15"><path d="M1.4 7 Q1 12.8 5 13.4 Q9.4 13.6 9.6 9 L9.2 5.6 L6.4 6.6 L5.4 2.6 L4.2 3 L4.6 6.4 Z" fill="#6ed024"/>
<path d="M2.4 8 Q3 6.6 5 7 L6 9 Q4 9.6 2.6 11 Z" fill="#b4f070" opacity=".8"/>
<path d="M1.6 12.4 L3 13.6 M5.4 13.8 L7 13.4" stroke="#1a5a0a" stroke-width="1"/>
<circle cx="4.4" cy="9.8" r="1.3" fill="#fff" stroke="#0a3a0a" stroke-width=".9"/>
<path d="M5.6 9.4 L9.6 7" stroke="#0a3a0a" stroke-width="1.1"/>
<circle cx="11.2" cy="2.8" r="1.9" fill="#d8701c"/><circle cx="11.2" cy="3.6" r="1.3" fill="#f6c9a0"/>
<path d="M8.6 9.4 L11.4 5.4 L16.4 9.6 L11.6 10.4 Z" fill="#f39a1c"/><path d="M11.6 9.4 L16 9.6 L12 10.6 Z" fill="#d84a1c"/></svg>
<span style="position:absolute;left:39.94px;top:4px;height:12px;line-height:12px;font-size:11px;font-weight:bold;-webkit-text-stroke:0;color:#1c2746;white-space:pre;display:inline-block;transform-origin:0 0;transform:scaleX(1.0312);">AKTYWNOŚĆ: Szybkie odpowiedzi (1)</span>
<div style="position:absolute;left:28px;top:17px;width:1px;height:11px;background:repeating-linear-gradient(#c2c8d6 0 1px,transparent 1px 2px)"></div>
<div style="position:absolute;left:28px;top:27px;width:9px;height:1px;background:repeating-linear-gradient(90deg,#c2c8d6 0 1px,transparent 1px 2px)"></div>
<span style="position:absolute;left:39.23px;top:23px;height:12px;line-height:12px;font-size:11px;color:#1c2746;white-space:pre;display:inline-block;transform-origin:0 0;transform:scaleX(0.9305);">Szkolenie</span>
<div style="position:absolute;left:13px;top:46px;width:6px;height:1px;background:repeating-linear-gradient(90deg,#c2c8d6 0 1px,transparent 1px 2px)"></div>
<svg style="position:absolute;left:7px;top:42px;" width="5" height="9" viewBox="0 0 5 9"><path d="M0.3 0.3 L4.6 4.5 L0.3 8.7 Z" fill="#4a5876"/></svg>
<svg style="position:absolute;left:21.599999999999994px;top:40px;" width="13" height="14" viewBox="0 0 13 14"><path d="M6.5 0.6 L12.4 2.6 L12.4 10.6 L6.5 13.4 L0.6 10.6 L0.6 2.6 Z" fill="#c9c9c9"/>
<path d="M6.5 0.6 L12.4 2.6 L6.5 4.8 L0.6 2.6 Z" fill="#e9e9e9"/>
<path d="M6.5 4.8 L12.4 2.6 L12.4 10.6 L6.5 13.4 Z" fill="#a9a9a9"/>
<path d="M0.6 6.4 L6.5 8.8 L12.4 6.4" fill="none" stroke="#dcdcdc" stroke-width=".7"/>
<path d="M0.6 10.4 L6.5 13.2" fill="none" stroke="#e0a060" stroke-width=".9"/><path d="M6.5 13.2 L12.4 10.4 M12.2 5 L12.2 6" fill="none" stroke="#4a4436" stroke-width=".9"/></svg>
<span style="position:absolute;left:39.67px;top:42px;height:12px;line-height:12px;font-size:11px;font-weight:bold;-webkit-text-stroke:0;color:#1c2746;white-space:pre;display:inline-block;transform-origin:0 0;transform:scaleX(1.0683);">CMMS: Grupy obiektów (1)</span>
<div style="position:absolute;left:13px;top:65px;width:6px;height:1px;background:repeating-linear-gradient(90deg,#c2c8d6 0 1px,transparent 1px 2px)"></div>
<svg style="position:absolute;left:7px;top:61px;" width="5" height="9" viewBox="0 0 5 9"><path d="M0.3 0.3 L4.6 4.5 L0.3 8.7 Z" fill="#4a5876"/></svg>
<svg style="position:absolute;left:21.599999999999994px;top:59px;" width="13" height="14" viewBox="0 0 13 14"><path d="M6.5 0.6 L12.4 2.6 L12.4 10.6 L6.5 13.4 L0.6 10.6 L0.6 2.6 Z" fill="#c9c9c9"/>
<path d="M6.5 0.6 L12.4 2.6 L6.5 4.8 L0.6 2.6 Z" fill="#e9e9e9"/>
<path d="M6.5 4.8 L12.4 2.6 L12.4 10.6 L6.5 13.4 Z" fill="#a9a9a9"/>
<path d="M0.6 6.4 L6.5 8.8 L12.4 6.4" fill="none" stroke="#dcdcdc" stroke-width=".7"/>
<path d="M0.6 10.4 L6.5 13.2" fill="none" stroke="#e0a060" stroke-width=".9"/><path d="M6.5 13.2 L12.4 10.4 M12.2 5 L12.2 6" fill="none" stroke="#4a4436" stroke-width=".9"/></svg>
<span style="position:absolute;left:39.66px;top:61px;height:12px;line-height:12px;font-size:11px;font-weight:bold;-webkit-text-stroke:0;color:#1c2746;white-space:pre;display:inline-block;transform-origin:0 0;transform:scaleX(1.0747);">CMMS: Lokalizacje obiektów (1)</span>
<div style="position:absolute;left:13px;top:84px;width:6px;height:1px;background:repeating-linear-gradient(90deg,#c2c8d6 0 1px,transparent 1px 2px)"></div>
<svg style="position:absolute;left:7px;top:80px;" width="5" height="9" viewBox="0 0 5 9"><path d="M0.3 0.3 L4.6 4.5 L0.3 8.7 Z" fill="#4a5876"/></svg>
<svg style="position:absolute;left:21.599999999999994px;top:78px;" width="13" height="14" viewBox="0 0 13 14"><path d="M6.5 0.6 L12.4 2.6 L12.4 10.6 L6.5 13.4 L0.6 10.6 L0.6 2.6 Z" fill="#c9c9c9"/>
<path d="M6.5 0.6 L12.4 2.6 L6.5 4.8 L0.6 2.6 Z" fill="#e9e9e9"/>
<path d="M6.5 4.8 L12.4 2.6 L12.4 10.6 L6.5 13.4 Z" fill="#a9a9a9"/>
<path d="M0.6 6.4 L6.5 8.8 L12.4 6.4" fill="none" stroke="#dcdcdc" stroke-width=".7"/>
<path d="M0.6 10.4 L6.5 13.2" fill="none" stroke="#e0a060" stroke-width=".9"/><path d="M6.5 13.2 L12.4 10.4 M12.2 5 L12.2 6" fill="none" stroke="#4a4436" stroke-width=".9"/></svg>
<span style="position:absolute;left:39.66px;top:80px;height:12px;line-height:12px;font-size:11px;font-weight:bold;-webkit-text-stroke:0;color:#1c2746;white-space:pre;display:inline-block;transform-origin:0 0;transform:scaleX(1.0774);">CMMS: Rodzaje konserwacji (1)</span>
<div style="position:absolute;left:10px;top:103px;width:9px;height:1px;background:repeating-linear-gradient(90deg,#c2c8d6 0 1px,transparent 1px 2px)"></div>
<svg style="position:absolute;left:21.599999999999994px;top:97px;" width="13" height="14" viewBox="0 0 13 14"><path d="M6.5 0.6 L12.4 2.6 L12.4 10.6 L6.5 13.4 L0.6 10.6 L0.6 2.6 Z" fill="#c9c9c9"/>
<path d="M6.5 0.6 L12.4 2.6 L6.5 4.8 L0.6 2.6 Z" fill="#e9e9e9"/>
<path d="M6.5 4.8 L12.4 2.6 L12.4 10.6 L6.5 13.4 Z" fill="#a9a9a9"/>
<path d="M0.6 6.4 L6.5 8.8 L12.4 6.4" fill="none" stroke="#dcdcdc" stroke-width=".7"/>
<path d="M0.6 10.4 L6.5 13.2" fill="none" stroke="#e0a060" stroke-width=".9"/><path d="M6.5 13.2 L12.4 10.4 M12.2 5 L12.2 6" fill="none" stroke="#4a4436" stroke-width=".9"/></svg>
<span style="position:absolute;left:39.67px;top:99px;height:12px;line-height:12px;font-size:11px;font-weight:bold;-webkit-text-stroke:0;color:#1c2746;white-space:pre;display:inline-block;transform-origin:0 0;transform:scaleX(1.0591);">CMMS: Rodzaje napraw</span>
<div style="position:absolute;left:13px;top:122px;width:6px;height:1px;background:repeating-linear-gradient(90deg,#c2c8d6 0 1px,transparent 1px 2px)"></div>
<svg style="position:absolute;left:7px;top:118px;" width="5" height="9" viewBox="0 0 5 9"><path d="M0.3 0.3 L4.6 4.5 L0.3 8.7 Z" fill="#4a5876"/></svg>
<div style="position:absolute;left:38px;top:114px;width:430px;height:19px;background:#ff0000;outline:1px dotted #30e0e0;outline-offset:-1px"></div>
<svg style="position:absolute;left:21.599999999999994px;top:116px;" width="13" height="14" viewBox="0 0 13 14"><path d="M6.5 0.6 L12.4 2.6 L12.4 10.6 L6.5 13.4 L0.6 10.6 L0.6 2.6 Z" fill="#c9c9c9"/>
<path d="M6.5 0.6 L12.4 2.6 L6.5 4.8 L0.6 2.6 Z" fill="#e9e9e9"/>
<path d="M6.5 4.8 L12.4 2.6 L12.4 10.6 L6.5 13.4 Z" fill="#a9a9a9"/>
<path d="M0.6 6.4 L6.5 8.8 L12.4 6.4" fill="none" stroke="#dcdcdc" stroke-width=".7"/>
<path d="M0.6 10.4 L6.5 13.2" fill="none" stroke="#e0a060" stroke-width=".9"/><path d="M6.5 13.2 L12.4 10.4 M12.2 5 L12.2 6" fill="none" stroke="#4a4436" stroke-width=".9"/></svg>
<span style="position:absolute;left:39.66px;top:118px;height:12px;line-height:12px;font-size:11px;font-weight:bold;-webkit-text-stroke:0;color:#fff;white-space:pre;display:inline-block;transform-origin:0 0;transform:scaleX(1.0737);">CMMS: Rodzaje przeglądów (5)</span>
<div style="position:absolute;left:10px;top:141px;width:9px;height:1px;background:repeating-linear-gradient(90deg,#c2c8d6 0 1px,transparent 1px 2px)"></div>
<svg style="position:absolute;left:21.599999999999994px;top:135px;" width="13" height="14" viewBox="0 0 13 14"><path d="M6.5 0.6 L12.4 2.6 L12.4 10.6 L6.5 13.4 L0.6 10.6 L0.6 2.6 Z" fill="#c9c9c9"/>
<path d="M6.5 0.6 L12.4 2.6 L6.5 4.8 L0.6 2.6 Z" fill="#e9e9e9"/>
<path d="M6.5 4.8 L12.4 2.6 L12.4 10.6 L6.5 13.4 Z" fill="#a9a9a9"/>
<path d="M0.6 6.4 L6.5 8.8 L12.4 6.4" fill="none" stroke="#dcdcdc" stroke-width=".7"/>
<path d="M0.6 10.4 L6.5 13.2" fill="none" stroke="#e0a060" stroke-width=".9"/><path d="M6.5 13.2 L12.4 10.4 M12.2 5 L12.2 6" fill="none" stroke="#4a4436" stroke-width=".9"/></svg>
<span style="position:absolute;left:39.67px;top:137px;height:12px;line-height:12px;font-size:11px;font-weight:bold;-webkit-text-stroke:0;color:#1c2746;white-space:pre;display:inline-block;transform-origin:0 0;transform:scaleX(1.0691);">CMMS: Rodzaje remontów</span>
<div style="position:absolute;left:13px;top:160px;width:6px;height:1px;background:repeating-linear-gradient(90deg,#c2c8d6 0 1px,transparent 1px 2px)"></div>
<svg style="position:absolute;left:7px;top:156px;" width="5" height="9" viewBox="0 0 5 9"><path d="M0.3 0.3 L4.6 4.5 L0.3 8.7 Z" fill="#4a5876"/></svg>
<svg style="position:absolute;left:21.599999999999994px;top:154px;" width="13" height="14" viewBox="0 0 13 14"><path d="M6.5 0.6 L12.4 2.6 L12.4 10.6 L6.5 13.4 L0.6 10.6 L0.6 2.6 Z" fill="#c9c9c9"/>
<path d="M6.5 0.6 L12.4 2.6 L6.5 4.8 L0.6 2.6 Z" fill="#e9e9e9"/>
<path d="M6.5 4.8 L12.4 2.6 L12.4 10.6 L6.5 13.4 Z" fill="#a9a9a9"/>
<path d="M0.6 6.4 L6.5 8.8 L12.4 6.4" fill="none" stroke="#dcdcdc" stroke-width=".7"/>
<path d="M0.6 10.4 L6.5 13.2" fill="none" stroke="#e0a060" stroke-width=".9"/><path d="M6.5 13.2 L12.4 10.4 M12.2 5 L12.2 6" fill="none" stroke="#4a4436" stroke-width=".9"/></svg>
<span style="position:absolute;left:39.66px;top:156px;height:12px;line-height:12px;font-size:11px;font-weight:bold;-webkit-text-stroke:0;color:#1c2746;white-space:pre;display:inline-block;transform-origin:0 0;transform:scaleX(1.0772);">CMMS: Skutki awarii (3)</span>
<div style="position:absolute;left:13px;top:179px;width:6px;height:1px;background:repeating-linear-gradient(90deg,#c2c8d6 0 1px,transparent 1px 2px)"></div>
<svg style="position:absolute;left:7px;top:175px;" width="5" height="9" viewBox="0 0 5 9"><path d="M0.3 0.3 L4.6 4.5 L0.3 8.7 Z" fill="#4a5876"/></svg>
<svg style="position:absolute;left:21.599999999999994px;top:173px;" width="13" height="14" viewBox="0 0 13 14"><path d="M6.5 0.6 L12.4 2.6 L12.4 10.6 L6.5 13.4 L0.6 10.6 L0.6 2.6 Z" fill="#c9c9c9"/>
<path d="M6.5 0.6 L12.4 2.6 L6.5 4.8 L0.6 2.6 Z" fill="#e9e9e9"/>
<path d="M6.5 4.8 L12.4 2.6 L12.4 10.6 L6.5 13.4 Z" fill="#a9a9a9"/>
<path d="M0.6 6.4 L6.5 8.8 L12.4 6.4" fill="none" stroke="#dcdcdc" stroke-width=".7"/>
<path d="M0.6 10.4 L6.5 13.2" fill="none" stroke="#e0a060" stroke-width=".9"/><path d="M6.5 13.2 L12.4 10.4 M12.2 5 L12.2 6" fill="none" stroke="#4a4436" stroke-width=".9"/></svg>
<span style="position:absolute;left:39.66px;top:175px;height:12px;line-height:12px;font-size:11px;font-weight:bold;-webkit-text-stroke:0;color:#1c2746;white-space:pre;display:inline-block;transform-origin:0 0;transform:scaleX(1.0837);">CMMS: Typy obiektów (2)</span>
<div style="position:absolute;left:10px;top:198px;width:9px;height:1px;background:repeating-linear-gradient(90deg,#c2c8d6 0 1px,transparent 1px 2px)"></div>
<svg style="position:absolute;left:20px;top:192px;" width="16" height="14" viewBox="0 0 16 14"><path d="M0.4 10.6 L3.2 6.6 L1.6 2.6 L2.8 2 L4.6 5 L6 6.4 L5.2 11.4 Z" fill="#f6a820"/>
<path d="M15.6 10.6 L12.8 6.6 L14.4 2.6 L13.2 2 L11.4 5 L10 6.4 L10.8 11.4 Z" fill="#f6a820"/>
<path d="M3 11 L13 11 L14 13.4 L2 13.4 Z" fill="#f08a14"/><path d="M3 12.8 L13 12.8 L13.4 13.6 L2.6 13.6 Z" fill="#d8401c"/>
<path d="M4.4 1.6 L5.6 1 L7 4 L9 4 L10.4 1 L11.6 1.6 L10.6 5 L10.8 9.6 L8 11.6 L5.2 9.6 L5.4 5 Z" fill="#9a3c10"/>
<circle cx="8" cy="2.6" r="1.5" fill="#f4b45a"/><circle cx="3.4" cy="2" r="1.2" fill="#f8c060"/><circle cx="12.6" cy="2" r="1.2" fill="#f8c060"/>
<path d="M6.8 6 h2.4 v2.6 h-2.4 z" fill="#f0d8a8"/></svg>
<span style="position:absolute;left:39.68px;top:194px;height:12px;line-height:12px;font-size:11px;font-weight:bold;-webkit-text-stroke:0;color:#1c2746;white-space:pre;display:inline-block;transform-origin:0 0;transform:scaleX(1.0400);">CRM: Branże</span>
<div style="position:absolute;left:10px;top:217px;width:9px;height:1px;background:repeating-linear-gradient(90deg,#c2c8d6 0 1px,transparent 1px 2px)"></div>
<svg style="position:absolute;left:20px;top:211px;" width="16" height="14" viewBox="0 0 16 14"><path d="M0.4 10.6 L3.2 6.6 L1.6 2.6 L2.8 2 L4.6 5 L6 6.4 L5.2 11.4 Z" fill="#f6a820"/>
<path d="M15.6 10.6 L12.8 6.6 L14.4 2.6 L13.2 2 L11.4 5 L10 6.4 L10.8 11.4 Z" fill="#f6a820"/>
<path d="M3 11 L13 11 L14 13.4 L2 13.4 Z" fill="#f08a14"/><path d="M3 12.8 L13 12.8 L13.4 13.6 L2.6 13.6 Z" fill="#d8401c"/>
<path d="M4.4 1.6 L5.6 1 L7 4 L9 4 L10.4 1 L11.6 1.6 L10.6 5 L10.8 9.6 L8 11.6 L5.2 9.6 L5.4 5 Z" fill="#9a3c10"/>
<circle cx="8" cy="2.6" r="1.5" fill="#f4b45a"/><circle cx="3.4" cy="2" r="1.2" fill="#f8c060"/><circle cx="12.6" cy="2" r="1.2" fill="#f8c060"/>
<path d="M6.8 6 h2.4 v2.6 h-2.4 z" fill="#f0d8a8"/></svg>
<span style="position:absolute;left:39.67px;top:213px;height:12px;line-height:12px;font-size:11px;font-weight:bold;-webkit-text-stroke:0;color:#1c2746;white-space:pre;display:inline-block;transform-origin:0 0;transform:scaleX(1.0525);">CRM: Cele przechowywania danych</span>
<div style="position:absolute;left:10px;top:236px;width:9px;height:1px;background:repeating-linear-gradient(90deg,#c2c8d6 0 1px,transparent 1px 2px)"></div>
<svg style="position:absolute;left:20px;top:230px;" width="16" height="14" viewBox="0 0 16 14"><path d="M0.4 10.6 L3.2 6.6 L1.6 2.6 L2.8 2 L4.6 5 L6 6.4 L5.2 11.4 Z" fill="#f6a820"/>
<path d="M15.6 10.6 L12.8 6.6 L14.4 2.6 L13.2 2 L11.4 5 L10 6.4 L10.8 11.4 Z" fill="#f6a820"/>
<path d="M3 11 L13 11 L14 13.4 L2 13.4 Z" fill="#f08a14"/><path d="M3 12.8 L13 12.8 L13.4 13.6 L2.6 13.6 Z" fill="#d8401c"/>
<path d="M4.4 1.6 L5.6 1 L7 4 L9 4 L10.4 1 L11.6 1.6 L10.6 5 L10.8 9.6 L8 11.6 L5.2 9.6 L5.4 5 Z" fill="#9a3c10"/>
<circle cx="8" cy="2.6" r="1.5" fill="#f4b45a"/><circle cx="3.4" cy="2" r="1.2" fill="#f8c060"/><circle cx="12.6" cy="2" r="1.2" fill="#f8c060"/>
<path d="M6.8 6 h2.4 v2.6 h-2.4 z" fill="#f0d8a8"/></svg>
<span style="position:absolute;left:39.68px;top:232px;height:12px;line-height:12px;font-size:11px;font-weight:bold;-webkit-text-stroke:0;color:#1c2746;white-space:pre;display:inline-block;transform-origin:0 0;transform:scaleX(1.0438);">CRM: Powody wycofania zgody</span>
<div style="position:absolute;left:10px;top:255px;width:9px;height:1px;background:repeating-linear-gradient(90deg,#c2c8d6 0 1px,transparent 1px 2px)"></div>
<svg style="position:absolute;left:20px;top:249px;" width="16" height="14" viewBox="0 0 16 14"><path d="M0.4 10.6 L3.2 6.6 L1.6 2.6 L2.8 2 L4.6 5 L6 6.4 L5.2 11.4 Z" fill="#f6a820"/>
<path d="M15.6 10.6 L12.8 6.6 L14.4 2.6 L13.2 2 L11.4 5 L10 6.4 L10.8 11.4 Z" fill="#f6a820"/>
<path d="M3 11 L13 11 L14 13.4 L2 13.4 Z" fill="#f08a14"/><path d="M3 12.8 L13 12.8 L13.4 13.6 L2.6 13.6 Z" fill="#d8401c"/>
<path d="M4.4 1.6 L5.6 1 L7 4 L9 4 L10.4 1 L11.6 1.6 L10.6 5 L10.8 9.6 L8 11.6 L5.2 9.6 L5.4 5 Z" fill="#9a3c10"/>
<circle cx="8" cy="2.6" r="1.5" fill="#f4b45a"/><circle cx="3.4" cy="2" r="1.2" fill="#f8c060"/><circle cx="12.6" cy="2" r="1.2" fill="#f8c060"/>
<path d="M6.8 6 h2.4 v2.6 h-2.4 z" fill="#f0d8a8"/></svg>
<span style="position:absolute;left:39.67px;top:251px;height:12px;line-height:12px;font-size:11px;font-weight:bold;-webkit-text-stroke:0;color:#1c2746;white-space:pre;display:inline-block;transform-origin:0 0;transform:scaleX(1.0689);">CRM: Tytuł zgody</span>
<div style="position:absolute;left:10px;top:274px;width:9px;height:1px;background:repeating-linear-gradient(90deg,#c2c8d6 0 1px,transparent 1px 2px)"></div>
<svg style="position:absolute;left:20px;top:268px;" width="16" height="14" viewBox="0 0 16 14"><path d="M0.4 10.6 L3.2 6.6 L1.6 2.6 L2.8 2 L4.6 5 L6 6.4 L5.2 11.4 Z" fill="#f6a820"/>
<path d="M15.6 10.6 L12.8 6.6 L14.4 2.6 L13.2 2 L11.4 5 L10 6.4 L10.8 11.4 Z" fill="#f6a820"/>
<path d="M3 11 L13 11 L14 13.4 L2 13.4 Z" fill="#f08a14"/><path d="M3 12.8 L13 12.8 L13.4 13.6 L2.6 13.6 Z" fill="#d8401c"/>
<path d="M4.4 1.6 L5.6 1 L7 4 L9 4 L10.4 1 L11.6 1.6 L10.6 5 L10.8 9.6 L8 11.6 L5.2 9.6 L5.4 5 Z" fill="#9a3c10"/>
<circle cx="8" cy="2.6" r="1.5" fill="#f4b45a"/><circle cx="3.4" cy="2" r="1.2" fill="#f8c060"/><circle cx="12.6" cy="2" r="1.2" fill="#f8c060"/>
<path d="M6.8 6 h2.4 v2.6 h-2.4 z" fill="#f0d8a8"/></svg>
<span style="position:absolute;left:39.67px;top:270px;height:12px;line-height:12px;font-size:11px;font-weight:bold;-webkit-text-stroke:0;color:#1c2746;white-space:pre;display:inline-block;transform-origin:0 0;transform:scaleX(1.0643);">CRM: Źródła pozyskania danych</span>
<div style="position:absolute;left:10px;top:293px;width:9px;height:1px;background:repeating-linear-gradient(90deg,#c2c8d6 0 1px,transparent 1px 2px)"></div>
<svg style="position:absolute;left:20px;top:287px;" width="16" height="14" viewBox="0 0 16 14"><path d="M0.4 10.6 L3.2 6.6 L1.6 2.6 L2.8 2 L4.6 5 L6 6.4 L5.2 11.4 Z" fill="#f6a820"/>
<path d="M15.6 10.6 L12.8 6.6 L14.4 2.6 L13.2 2 L11.4 5 L10 6.4 L10.8 11.4 Z" fill="#f6a820"/>
<path d="M3 11 L13 11 L14 13.4 L2 13.4 Z" fill="#f08a14"/><path d="M3 12.8 L13 12.8 L13.4 13.6 L2.6 13.6 Z" fill="#d8401c"/>
<path d="M4.4 1.6 L5.6 1 L7 4 L9 4 L10.4 1 L11.6 1.6 L10.6 5 L10.8 9.6 L8 11.6 L5.2 9.6 L5.4 5 Z" fill="#9a3c10"/>
<circle cx="8" cy="2.6" r="1.5" fill="#f4b45a"/><circle cx="3.4" cy="2" r="1.2" fill="#f8c060"/><circle cx="12.6" cy="2" r="1.2" fill="#f8c060"/>
<path d="M6.8 6 h2.4 v2.6 h-2.4 z" fill="#f0d8a8"/></svg>
<span style="position:absolute;left:39.67px;top:289px;height:12px;line-height:12px;font-size:11px;font-weight:bold;-webkit-text-stroke:0;color:#1c2746;white-space:pre;display:inline-block;transform-origin:0 0;transform:scaleX(1.0599);">CRM: Źródła pozyskania zgody</span>
<div style="position:absolute;left:10px;top:312px;width:9px;height:1px;background:repeating-linear-gradient(90deg,#c2c8d6 0 1px,transparent 1px 2px)"></div>
<svg style="position:absolute;left:20px;top:306px;" width="16" height="14" viewBox="0 0 16 14"><path d="M0.4 10.6 L3.2 6.6 L1.6 2.6 L2.8 2 L4.6 5 L6 6.4 L5.2 11.4 Z" fill="#f6a820"/>
<path d="M15.6 10.6 L12.8 6.6 L14.4 2.6 L13.2 2 L11.4 5 L10 6.4 L10.8 11.4 Z" fill="#f6a820"/>
<path d="M3 11 L13 11 L14 13.4 L2 13.4 Z" fill="#f08a14"/><path d="M3 12.8 L13 12.8 L13.4 13.6 L2.6 13.6 Z" fill="#d8401c"/>
<path d="M4.4 1.6 L5.6 1 L7 4 L9 4 L10.4 1 L11.6 1.6 L10.6 5 L10.8 9.6 L8 11.6 L5.2 9.6 L5.4 5 Z" fill="#9a3c10"/>
<circle cx="8" cy="2.6" r="1.5" fill="#f4b45a"/><circle cx="3.4" cy="2" r="1.2" fill="#f8c060"/><circle cx="12.6" cy="2" r="1.2" fill="#f8c060"/>
<path d="M6.8 6 h2.4 v2.6 h-2.4 z" fill="#f0d8a8"/></svg>
<span style="position:absolute;left:39.67px;top:308px;height:12px;line-height:12px;font-size:11px;font-weight:bold;-webkit-text-stroke:0;color:#1c2746;white-space:pre;display:inline-block;transform-origin:0 0;transform:scaleX(1.0568);">CRM: Źródła wycofania zgody</span>
<div style="position:absolute;left:13px;top:331px;width:6px;height:1px;background:repeating-linear-gradient(90deg,#c2c8d6 0 1px,transparent 1px 2px)"></div>
<svg style="position:absolute;left:7px;top:327px;" width="5" height="9" viewBox="0 0 5 9"><path d="M0.3 0.3 L4.6 4.5 L0.3 8.7 Z" fill="#4a5876"/></svg>
<svg style="position:absolute;left:21px;top:325px;" width="15" height="15" viewBox="0 0 15 15"><rect x="0.6" y="1" width="13.4" height="10.6" rx="1" fill="#f7f9fc" stroke="#3f78c8" stroke-width="1"/>
<rect x="0.6" y="1" width="13.4" height="3" fill="#4a8ae0"/>
<path d="M3 6.4 h8.4 M3 8.6 h5" stroke="#9ab6dc" stroke-width="1"/>
<circle cx="10.6" cy="11" r="3.2" fill="#1c2c50"/><circle cx="10.6" cy="11" r="1.2" fill="#e8eefa"/>
<path d="M10.6 7 v8 M6.6 11 h8 M7.8 8.2 l5.6 5.6 M13.4 8.2 l-5.6 5.6" stroke="#1c2c50" stroke-width="1"/></svg>
<span style="position:absolute;left:39.39px;top:327px;height:12px;line-height:12px;font-size:11px;font-weight:bold;-webkit-text-stroke:0;color:#1c2746;white-space:pre;display:inline-block;transform-origin:0 0;transform:scaleX(1.0768);">DMS: Grupy (1)</span>
<div style="position:absolute;left:10px;top:350px;width:9px;height:1px;background:repeating-linear-gradient(90deg,#c2c8d6 0 1px,transparent 1px 2px)"></div>
<svg style="position:absolute;left:21px;top:344px;" width="15" height="15" viewBox="0 0 15 15"><rect x="0.6" y="1" width="13.4" height="10.6" rx="1" fill="#f7f9fc" stroke="#3f78c8" stroke-width="1"/>
<rect x="0.6" y="1" width="13.4" height="3" fill="#4a8ae0"/>
<path d="M3 6.4 h8.4 M3 8.6 h5" stroke="#9ab6dc" stroke-width="1"/>
<circle cx="10.6" cy="11" r="3.2" fill="#1c2c50"/><circle cx="10.6" cy="11" r="1.2" fill="#e8eefa"/>
<path d="M10.6 7 v8 M6.6 11 h8 M7.8 8.2 l5.6 5.6 M13.4 8.2 l-5.6 5.6" stroke="#1c2c50" stroke-width="1"/></svg>
<span style="position:absolute;left:39.41px;top:346px;height:12px;line-height:12px;font-size:11px;font-weight:bold;-webkit-text-stroke:0;color:#1c2746;white-space:pre;display:inline-block;transform-origin:0 0;transform:scaleX(1.0549);">DMS: Słowa kluczowe</span>
<div style="position:absolute;left:13px;top:369px;width:6px;height:1px;background:repeating-linear-gradient(90deg,#c2c8d6 0 1px,transparent 1px 2px)"></div>
<svg style="position:absolute;left:7px;top:365px;" width="5" height="9" viewBox="0 0 5 9"><path d="M0.3 0.3 L4.6 4.5 L0.3 8.7 Z" fill="#4a5876"/></svg>
<svg style="position:absolute;left:22px;top:364px;" width="12" height="13" viewBox="0 0 12 13"><path d="M0.8 0.8 L11 0.8 L11 2.8 L4.4 2.8 L7.8 6.4 L4.4 10.2 L11 10.2 L11 12.2 L0.8 12.2 L0.8 10.6 L4.8 6.4 L0.8 2.4 Z" fill="#f8c83a" stroke="#d8601a" stroke-width=".9"/></svg>
<span style="position:absolute;left:39.41px;top:365px;height:12px;line-height:12px;font-size:11px;font-weight:bold;-webkit-text-stroke:0;color:#1c2746;white-space:pre;display:inline-block;transform-origin:0 0;transform:scaleX(1.0566);">FINANSE: Waluty (4)</span>
<div style="position:absolute;left:13px;top:388px;width:6px;height:1px;background:repeating-linear-gradient(90deg,#c2c8d6 0 1px,transparent 1px 2px)"></div>
<svg style="position:absolute;left:7px;top:384px;" width="5" height="9" viewBox="0 0 5 9"><path d="M0.3 0.3 L4.6 4.5 L0.3 8.7 Z" fill="#4a5876"/></svg>
<svg style="position:absolute;left:20px;top:381px;" width="16" height="15" viewBox="0 0 16 15"><path d="M8 0.6 L0.4 8 L1.6 9.2 L8 3.2 L14.4 9.2 L15.6 8 Z" fill="#58b81c" stroke="#2f8a0c" stroke-width=".7"/>
<path d="M2.8 8 L8 3.2 L13.2 8 L13.2 13.6 Q13.2 14.4 12.4 14.4 L3.6 14.4 Q2.8 14.4 2.8 13.6 Z" fill="#fafbfe" stroke="#4f78c8" stroke-width=".9"/>
<rect x="11" y="2" width="2" height="3.4" fill="#dfe6f4" stroke="#4f78c8" stroke-width=".5"/>
<rect x="6.2" y="8.6" width="3.6" height="5.8" fill="#f6c81c" stroke="#d03a1a" stroke-width="1"/></svg>
<span style="position:absolute;left:39.4px;top:384px;height:12px;line-height:12px;font-size:11px;font-weight:bold;-webkit-text-stroke:0;color:#1c2746;white-space:pre;display:inline-block;transform-origin:0 0;transform:scaleX(1.0653);">MAGAZYN: Adresy dostaw dla zamówień zakupu (2)</span>
<div style="position:absolute;left:13px;top:407px;width:6px;height:1px;background:repeating-linear-gradient(90deg,#c2c8d6 0 1px,transparent 1px 2px)"></div>
<svg style="position:absolute;left:7px;top:403px;" width="5" height="9" viewBox="0 0 5 9"><path d="M0.3 0.3 L4.6 4.5 L0.3 8.7 Z" fill="#4a5876"/></svg>
<svg style="position:absolute;left:20px;top:400px;" width="16" height="15" viewBox="0 0 16 15"><path d="M8 0.6 L0.4 8 L1.6 9.2 L8 3.2 L14.4 9.2 L15.6 8 Z" fill="#58b81c" stroke="#2f8a0c" stroke-width=".7"/>
<path d="M2.8 8 L8 3.2 L13.2 8 L13.2 13.6 Q13.2 14.4 12.4 14.4 L3.6 14.4 Q2.8 14.4 2.8 13.6 Z" fill="#fafbfe" stroke="#4f78c8" stroke-width=".9"/>
<rect x="11" y="2" width="2" height="3.4" fill="#dfe6f4" stroke="#4f78c8" stroke-width=".5"/>
<rect x="6.2" y="8.6" width="3.6" height="5.8" fill="#f6c81c" stroke="#d03a1a" stroke-width="1"/></svg>
<span style="position:absolute;left:39.41px;top:403px;height:12px;line-height:12px;font-size:11px;font-weight:bold;-webkit-text-stroke:0;color:#1c2746;white-space:pre;display:inline-block;transform-origin:0 0;transform:scaleX(1.0565);">MAGAZYN: Grupy kontroli jakości (3)</span>
<div style="position:absolute;left:10px;top:426px;width:9px;height:1px;background:repeating-linear-gradient(90deg,#c2c8d6 0 1px,transparent 1px 2px)"></div>
<svg style="position:absolute;left:20px;top:419px;" width="16" height="15" viewBox="0 0 16 15"><path d="M8 0.6 L0.4 8 L1.6 9.2 L8 3.2 L14.4 9.2 L15.6 8 Z" fill="#58b81c" stroke="#2f8a0c" stroke-width=".7"/>
<path d="M2.8 8 L8 3.2 L13.2 8 L13.2 13.6 Q13.2 14.4 12.4 14.4 L3.6 14.4 Q2.8 14.4 2.8 13.6 Z" fill="#fafbfe" stroke="#4f78c8" stroke-width=".9"/>
<rect x="11" y="2" width="2" height="3.4" fill="#dfe6f4" stroke="#4f78c8" stroke-width=".5"/>
<rect x="6.2" y="8.6" width="3.6" height="5.8" fill="#f6c81c" stroke="#d03a1a" stroke-width="1"/></svg>
<span style="position:absolute;left:39.4px;top:422px;height:12px;line-height:12px;font-size:11px;font-weight:bold;-webkit-text-stroke:0;color:#1c2746;white-space:pre;display:inline-block;transform-origin:0 0;transform:scaleX(1.0667);">MAGAZYN: Historia asortymentu - cele</span>
<div style="position:absolute;left:10px;top:445px;width:9px;height:1px;background:repeating-linear-gradient(90deg,#c2c8d6 0 1px,transparent 1px 2px)"></div>
<svg style="position:absolute;left:20px;top:438px;" width="16" height="15" viewBox="0 0 16 15"><path d="M8 0.6 L0.4 8 L1.6 9.2 L8 3.2 L14.4 9.2 L15.6 8 Z" fill="#58b81c" stroke="#2f8a0c" stroke-width=".7"/>
<path d="M2.8 8 L8 3.2 L13.2 8 L13.2 13.6 Q13.2 14.4 12.4 14.4 L3.6 14.4 Q2.8 14.4 2.8 13.6 Z" fill="#fafbfe" stroke="#4f78c8" stroke-width=".9"/>
<rect x="11" y="2" width="2" height="3.4" fill="#dfe6f4" stroke="#4f78c8" stroke-width=".5"/>
<rect x="6.2" y="8.6" width="3.6" height="5.8" fill="#f6c81c" stroke="#d03a1a" stroke-width="1"/></svg>
<span style="position:absolute;left:39.4px;top:441px;height:12px;line-height:12px;font-size:11px;font-weight:bold;-webkit-text-stroke:0;color:#1c2746;white-space:pre;display:inline-block;transform-origin:0 0;transform:scaleX(1.0709);">MAGAZYN: Historia asortymentu - zmiany</span>
<div style="position:absolute;left:13px;top:464px;width:6px;height:1px;background:repeating-linear-gradient(90deg,#c2c8d6 0 1px,transparent 1px 2px)"></div>
<svg style="position:absolute;left:7px;top:460px;" width="5" height="9" viewBox="0 0 5 9"><path d="M0.3 0.3 L4.6 4.5 L0.3 8.7 Z" fill="#4a5876"/></svg>
<svg style="position:absolute;left:20px;top:457px;" width="16" height="15" viewBox="0 0 16 15"><path d="M8 0.6 L0.4 8 L1.6 9.2 L8 3.2 L14.4 9.2 L15.6 8 Z" fill="#58b81c" stroke="#2f8a0c" stroke-width=".7"/>
<path d="M2.8 8 L8 3.2 L13.2 8 L13.2 13.6 Q13.2 14.4 12.4 14.4 L3.6 14.4 Q2.8 14.4 2.8 13.6 Z" fill="#fafbfe" stroke="#4f78c8" stroke-width=".9"/>
<rect x="11" y="2" width="2" height="3.4" fill="#dfe6f4" stroke="#4f78c8" stroke-width=".5"/>
<rect x="6.2" y="8.6" width="3.6" height="5.8" fill="#f6c81c" stroke="#d03a1a" stroke-width="1"/></svg>
<span style="position:absolute;left:39.4px;top:460px;height:12px;line-height:12px;font-size:11px;font-weight:bold;-webkit-text-stroke:0;color:#1c2746;white-space:pre;display:inline-block;transform-origin:0 0;transform:scaleX(1.0675);">MAGAZYN: Jednostki miary (10)</span>
<div style="position:absolute;left:13px;top:483px;width:6px;height:1px;background:repeating-linear-gradient(90deg,#c2c8d6 0 1px,transparent 1px 2px)"></div>
<svg style="position:absolute;left:7px;top:479px;" width="5" height="9" viewBox="0 0 5 9"><path d="M0.3 0.3 L4.6 4.5 L0.3 8.7 Z" fill="#4a5876"/></svg>
<svg style="position:absolute;left:20px;top:476px;" width="16" height="15" viewBox="0 0 16 15"><path d="M8 0.6 L0.4 8 L1.6 9.2 L8 3.2 L14.4 9.2 L15.6 8 Z" fill="#58b81c" stroke="#2f8a0c" stroke-width=".7"/>
<path d="M2.8 8 L8 3.2 L13.2 8 L13.2 13.6 Q13.2 14.4 12.4 14.4 L3.6 14.4 Q2.8 14.4 2.8 13.6 Z" fill="#fafbfe" stroke="#4f78c8" stroke-width=".9"/>
<rect x="11" y="2" width="2" height="3.4" fill="#dfe6f4" stroke="#4f78c8" stroke-width=".5"/>
<rect x="6.2" y="8.6" width="3.6" height="5.8" fill="#f6c81c" stroke="#d03a1a" stroke-width="1"/></svg>
<span style="position:absolute;left:39.4px;top:479px;height:12px;line-height:12px;font-size:11px;font-weight:bold;-webkit-text-stroke:0;color:#1c2746;white-space:pre;display:inline-block;transform-origin:0 0;transform:scaleX(1.0710);">MAGAZYN: Lokalizacje - rodzaje (3)</span>
<div style="position:absolute;left:10px;top:502px;width:9px;height:1px;background:repeating-linear-gradient(90deg,#c2c8d6 0 1px,transparent 1px 2px)"></div>
<svg style="position:absolute;left:20px;top:495px;" width="16" height="15" viewBox="0 0 16 15"><path d="M8 0.6 L0.4 8 L1.6 9.2 L8 3.2 L14.4 9.2 L15.6 8 Z" fill="#58b81c" stroke="#2f8a0c" stroke-width=".7"/>
<path d="M2.8 8 L8 3.2 L13.2 8 L13.2 13.6 Q13.2 14.4 12.4 14.4 L3.6 14.4 Q2.8 14.4 2.8 13.6 Z" fill="#fafbfe" stroke="#4f78c8" stroke-width=".9"/>
<rect x="11" y="2" width="2" height="3.4" fill="#dfe6f4" stroke="#4f78c8" stroke-width=".5"/>
<rect x="6.2" y="8.6" width="3.6" height="5.8" fill="#f6c81c" stroke="#d03a1a" stroke-width="1"/></svg>
<span style="position:absolute;left:39.42px;top:498px;height:12px;line-height:12px;font-size:11px;font-weight:bold;-webkit-text-stroke:0;color:#1c2746;white-space:pre;display:inline-block;transform-origin:0 0;transform:scaleX(1.0435);">MAGAZYN: Lokalizacje - szablony</span>
<div style="position:absolute;left:13px;top:521px;width:6px;height:1px;background:repeating-linear-gradient(90deg,#c2c8d6 0 1px,transparent 1px 2px)"></div>
<svg style="position:absolute;left:7px;top:517px;" width="5" height="9" viewBox="0 0 5 9"><path d="M0.3 0.3 L4.6 4.5 L0.3 8.7 Z" fill="#4a5876"/></svg>
<svg style="position:absolute;left:20px;top:514px;" width="16" height="15" viewBox="0 0 16 15"><path d="M8 0.6 L0.4 8 L1.6 9.2 L8 3.2 L14.4 9.2 L15.6 8 Z" fill="#58b81c" stroke="#2f8a0c" stroke-width=".7"/>
<path d="M2.8 8 L8 3.2 L13.2 8 L13.2 13.6 Q13.2 14.4 12.4 14.4 L3.6 14.4 Q2.8 14.4 2.8 13.6 Z" fill="#fafbfe" stroke="#4f78c8" stroke-width=".9"/>
<rect x="11" y="2" width="2" height="3.4" fill="#dfe6f4" stroke="#4f78c8" stroke-width=".5"/>
<rect x="6.2" y="8.6" width="3.6" height="5.8" fill="#f6c81c" stroke="#d03a1a" stroke-width="1"/></svg>
<span style="position:absolute;left:39.41px;top:517px;height:12px;line-height:12px;font-size:11px;font-weight:bold;-webkit-text-stroke:0;color:#1c2746;white-space:pre;display:inline-block;transform-origin:0 0;transform:scaleX(1.0586);">MAGAZYN: Stawki VAT (6)</span>
<div style="position:absolute;left:10px;top:540px;width:9px;height:1px;background:repeating-linear-gradient(90deg,#c2c8d6 0 1px,transparent 1px 2px)"></div>
<svg style="position:absolute;left:20px;top:533px;" width="16" height="15" viewBox="0 0 16 15"><path d="M8 0.6 L0.4 8 L1.6 9.2 L8 3.2 L14.4 9.2 L15.6 8 Z" fill="#58b81c" stroke="#2f8a0c" stroke-width=".7"/>
<path d="M2.8 8 L8 3.2 L13.2 8 L13.2 13.6 Q13.2 14.4 12.4 14.4 L3.6 14.4 Q2.8 14.4 2.8 13.6 Z" fill="#fafbfe" stroke="#4f78c8" stroke-width=".9"/>
<rect x="11" y="2" width="2" height="3.4" fill="#dfe6f4" stroke="#4f78c8" stroke-width=".5"/>
<rect x="6.2" y="8.6" width="3.6" height="5.8" fill="#f6c81c" stroke="#d03a1a" stroke-width="1"/></svg>
<span style="position:absolute;left:39.41px;top:536px;height:12px;line-height:12px;font-size:11px;font-weight:bold;-webkit-text-stroke:0;color:#1c2746;white-space:pre;display:inline-block;transform-origin:0 0;transform:scaleX(1.0537);">MAGAZYN: Typy księgowe produktów</span>
<div style="position:absolute;left:13px;top:559px;width:6px;height:1px;background:repeating-linear-gradient(90deg,#c2c8d6 0 1px,transparent 1px 2px)"></div>
<svg style="position:absolute;left:7px;top:555px;" width="5" height="9" viewBox="0 0 5 9"><path d="M0.3 0.3 L4.6 4.5 L0.3 8.7 Z" fill="#4a5876"/></svg>
<svg style="position:absolute;left:20px;top:552px;" width="16" height="15" viewBox="0 0 16 15"><path d="M8 0.6 L0.4 8 L1.6 9.2 L8 3.2 L14.4 9.2 L15.6 8 Z" fill="#58b81c" stroke="#2f8a0c" stroke-width=".7"/>
<path d="M2.8 8 L8 3.2 L13.2 8 L13.2 13.6 Q13.2 14.4 12.4 14.4 L3.6 14.4 Q2.8 14.4 2.8 13.6 Z" fill="#fafbfe" stroke="#4f78c8" stroke-width=".9"/>
<rect x="11" y="2" width="2" height="3.4" fill="#dfe6f4" stroke="#4f78c8" stroke-width=".5"/>
<rect x="6.2" y="8.6" width="3.6" height="5.8" fill="#f6c81c" stroke="#d03a1a" stroke-width="1"/></svg>
<span style="position:absolute;left:39.42px;top:555px;height:12px;line-height:12px;font-size:11px;font-weight:bold;-webkit-text-stroke:0;color:#1c2746;white-space:pre;display:inline-block;transform-origin:0 0;transform:scaleX(1.0401);">MAGAZYN: GTU: Definicje (13)</span>
<div style="position:absolute;left:10px;top:578px;width:9px;height:1px;background:repeating-linear-gradient(90deg,#c2c8d6 0 1px,transparent 1px 2px)"></div>
<svg style="position:absolute;left:20px;top:571px;" width="16" height="15" viewBox="0 0 16 15"><path d="M8 0.6 L0.4 8 L1.6 9.2 L8 3.2 L14.4 9.2 L15.6 8 Z" fill="#58b81c" stroke="#2f8a0c" stroke-width=".7"/>
<path d="M2.8 8 L8 3.2 L13.2 8 L13.2 13.6 Q13.2 14.4 12.4 14.4 L3.6 14.4 Q2.8 14.4 2.8 13.6 Z" fill="#fafbfe" stroke="#4f78c8" stroke-width=".9"/>
<rect x="11" y="2" width="2" height="3.4" fill="#dfe6f4" stroke="#4f78c8" stroke-width=".5"/>
<rect x="6.2" y="8.6" width="3.6" height="5.8" fill="#f6c81c" stroke="#d03a1a" stroke-width="1"/></svg>
<span style="position:absolute;left:39.44px;top:574px;height:12px;line-height:12px;font-size:11px;font-weight:bold;-webkit-text-stroke:0;color:#1c2746;white-space:pre;display:inline-block;transform-origin:0 0;transform:scaleX(1.0127);">MAGAZYN: MPK: Definicje</span>
<div style="position:absolute;left:10px;top:597px;width:9px;height:1px;background:repeating-linear-gradient(90deg,#c2c8d6 0 1px,transparent 1px 2px)"></div>
<svg style="position:absolute;left:20px;top:590px;" width="16" height="15" viewBox="0 0 16 15"><path d="M8 0.6 L0.4 8 L1.6 9.2 L8 3.2 L14.4 9.2 L15.6 8 Z" fill="#58b81c" stroke="#2f8a0c" stroke-width=".7"/>
<path d="M2.8 8 L8 3.2 L13.2 8 L13.2 13.6 Q13.2 14.4 12.4 14.4 L3.6 14.4 Q2.8 14.4 2.8 13.6 Z" fill="#fafbfe" stroke="#4f78c8" stroke-width=".9"/>
<rect x="11" y="2" width="2" height="3.4" fill="#dfe6f4" stroke="#4f78c8" stroke-width=".5"/>
<rect x="6.2" y="8.6" width="3.6" height="5.8" fill="#f6c81c" stroke="#d03a1a" stroke-width="1"/></svg>
<span style="position:absolute;left:39.42px;top:593px;height:12px;line-height:12px;font-size:11px;font-weight:bold;-webkit-text-stroke:0;color:#1c2746;white-space:pre;display:inline-block;transform-origin:0 0;transform:scaleX(1.0436);">MAGAZYN: Kategorie zakupów</span>
<div style="position:absolute;left:458px;top:1px;width:4px;height:333px;background:rgba(140,146,146,.75)"></div>
</div>
<div style="position:absolute;left:203px;top:730px;width:468px;height:2px;background:#8b98b0"></div>
<div style="position:absolute;left:678px;top:88px;width:131px;height:16px;border:1px solid #93a0b8;background:#bcc8db"></div>
<span style="position:absolute;left:688.47px;top:91px;height:12px;line-height:12px;font-size:11px;color:#1c2746;white-space:pre;display:inline-block;transform-origin:0 0;transform:scaleX(0.9336);text-shadow:1px 1px 0 #fff;">POLA DEFINIOWALNE</span>
<div style="position:absolute;left:684px;top:96px;width:2px;height:2px;background:#2a3350;box-shadow:1px 1px 0 #fff"></div>
<div style="position:absolute;left:801px;top:96px;width:2px;height:2px;background:#2a3350;box-shadow:1px 1px 0 #fff"></div>
<div style="position:absolute;left:683px;top:110px;width:1px;height:32px;background:#a3afc5"></div>
<div style="position:absolute;left:684px;top:110px;width:1px;height:32px;background:#c4cedd"></div>
<div style="position:absolute;left:864px;top:110px;width:1px;height:32px;background:#a3afc5"></div>
<div style="position:absolute;left:865px;top:110px;width:1px;height:32px;background:#c4cedd"></div>
<div style="position:absolute;left:687px;top:111px;width:132px;height:30px;background:#fff;border:1px solid #8e9bb2"></div>
<svg style="position:absolute;left:823px;top:118px;" width="16" height="16" viewBox="0 0 16 16"><path d="M13.86 6.69 L15.74 7.07 L15.74 8.93 L13.86 9.31 L13.07 11.21 L14.14 12.82 L12.82 14.14 L11.21 13.07 L9.31 13.86 L8.93 15.74 L7.07 15.74 L6.69 13.86 L4.79 13.07 L3.18 14.14 L1.86 12.82 L2.93 11.21 L2.14 9.31 L0.26 8.93 L0.26 7.07 L2.14 6.69 L2.93 4.79 L1.86 3.18 L3.18 1.86 L4.79 2.93 L6.69 2.14 L7.07 0.26 L8.93 0.26 L9.31 2.14 L11.21 2.93 L12.82 1.86 L14.14 3.18 L13.07 4.79 Z" fill="#1f5f9a"/><circle cx="8" cy="8" r="4.6" fill="#bcc8da"/><circle cx="8" cy="8" r="5.2" fill="none" stroke="#5fb4e8" stroke-width="1"/><circle cx="8" cy="8" r="3.6" fill="none" stroke="#1f4f86" stroke-width="1.2"/></svg>
<div style="position:absolute;left:844px;top:118px;width:15px;height:15px;background:linear-gradient(135deg,#d5dae4,#f2f3f7);border:1px solid #8e99ad;box-shadow:inset 0 0 0 1px #fff"></div>
<svg style="position:absolute;left:1057px;top:119px;" width="16" height="15" viewBox="0 0 16 15"><g fill="#fff" stroke="#2f6fd0" stroke-width="1"><circle cx="2.4" cy="2.2" r="1.6"/><circle cx="2.4" cy="7.4" r="1.6"/><circle cx="2.4" cy="12.6" r="1.6"/></g>
<path d="M6 2.2 h9 M6 7.4 h9 M6 12.6 h9" stroke="#1c2746" stroke-width="1.3"/></svg>
<svg style="position:absolute;left:1088px;top:118px;" width="17" height="17" viewBox="0 0 17 17"><path d="M8.4 0.6 L6 6 L8.2 6 Q8.6 9.4 5.4 10.8 L1 6.8 L4.2 6.4 Q4 3 8.4 0.6 Z" fill="#4aa2f0"/>
<path d="M11.4 5 L16.4 9.6 L13.4 9.8 Q13.6 14 9 16.4 Q11 12.6 10.2 9.8 L7.6 9.6 Z" fill="#1d6fe0"/></svg>
<svg style="position:absolute;left:1123px;top:117px;" width="16" height="16" viewBox="0 0 16 16"><rect x="4.6" y="0.8" width="10.4" height="11" fill="#f4f6fb" stroke="#5a6a8a" stroke-width="1"/><rect x="6" y="2.2" width="7.6" height="8.2" fill="#dfe6f4"/>
<path d="M0.6 0.8 h3.4 M2.3 0.8 v11.8 M0.6 12.6 h3.4" stroke="#1c2746" stroke-width="1.1" fill="none"/>
<path d="M4.6 13.4 v2.4 M15 13.4 v2.4 M4.6 14.6 h10.4" stroke="#1c2746" stroke-width="1.1" fill="none"/></svg>
<div style="position:absolute;left:678px;top:145px;width:455px;height:38px;background:#c6d0e0"></div>
<span style="position:absolute;left:684.44px;top:158px;height:14px;line-height:14px;font-size:12px;color:#a2aec3;white-space:pre;display:inline-block;transform-origin:0 0;transform:scaleX(1.0632);">Panel grupowania</span>
<div style="position:absolute;left:678px;top:182px;width:455px;height:1px;background:#a9b5ca"></div>
<div style="position:absolute;left:678px;top:183px;width:455px;height:22px;background:linear-gradient(#eceef3 0%,#e3e6ed 45%,#d7dbe5 50%,#dadee7 100%)"></div>
<div style="position:absolute;left:689px;top:184px;width:1px;height:20px;background:#d3d8e2"></div>
<div style="position:absolute;left:690px;top:184px;width:1px;height:20px;background:#eef0f4"></div>
<div style="position:absolute;left:771px;top:184px;width:1px;height:20px;background:#d3d8e2"></div>
<div style="position:absolute;left:772px;top:184px;width:1px;height:20px;background:#eef0f4"></div>
<div style="position:absolute;left:849px;top:184px;width:1px;height:20px;background:#d3d8e2"></div>
<div style="position:absolute;left:850px;top:184px;width:1px;height:20px;background:#eef0f4"></div>
<div style="position:absolute;left:1048px;top:184px;width:1px;height:20px;background:#d3d8e2"></div>
<div style="position:absolute;left:1049px;top:184px;width:1px;height:20px;background:#eef0f4"></div>
<span style="position:absolute;left:690.44px;top:188px;height:14px;line-height:14px;font-size:12px;color:#3b4663;white-space:pre;display:inline-block;transform-origin:0 0;transform:scaleX(1.0635);">Moduł</span>
<span style="position:absolute;left:773.45px;top:188px;height:14px;line-height:14px;font-size:12px;color:#3b4663;white-space:pre;display:inline-block;transform-origin:0 0;transform:scaleX(1.0450);">Karta</span>
<span style="position:absolute;left:851.98px;top:188px;height:14px;line-height:14px;font-size:12px;color:#3b4663;white-space:pre;display:inline-block;transform-origin:0 0;transform:scaleX(1.0490);">Ścieżka dostępu</span>
<span style="position:absolute;left:1050.48px;top:188px;height:14px;line-height:14px;font-size:12px;color:#3b4663;white-space:pre;display:inline-block;transform-origin:0 0;transform:scaleX(1.0180);">Etykieta</span>
<svg style="position:absolute;left:679px;top:190px;" width="8" height="8" viewBox="0 0 8 8"><path d="M4 0.4 v7.2 M0.4 4 h7.2 M1.4 1.4 l5.2 5.2 M6.6 1.4 l-5.2 5.2" stroke="#222c44" stroke-width="1.2"/><circle cx="4" cy="4" r="1" fill="#dfe3ea"/></svg>
<div style="position:absolute;left:678px;top:205px;width:455px;height:21px;background:#edf5ec"></div>
<div style="position:absolute;left:678px;top:205px;width:12px;height:22px;background:#e1e5ec"></div>
<svg style="position:absolute;left:680px;top:212px;" width="6" height="8" viewBox="0 0 6 8"><ellipse cx="3" cy="2.2" rx="2.8" ry="2.1" fill="#222c44"/><ellipse cx="3" cy="1.8" rx="1.4" ry=".8" fill="#e1e5ec"/><rect x="2.3" y="4" width="1.4" height="3.6" fill="#222c44"/></svg>
<span style="position:absolute;left:851.68px;top:209px;height:14px;line-height:14px;font-size:12px;color:#7d7d7d;white-space:pre;display:inline-block;transform-origin:0 0;transform:scaleX(1.0939);">kliknij aby dodać filtr</span>
<div style="position:absolute;left:690px;top:225px;width:443px;height:2px;background:#9dabc2"></div>
<div style="position:absolute;left:678px;top:227px;width:455px;height:488px;overflow:hidden;background:#f5f6f9">
<div style="position:absolute;left:0px;top:0px;width:455px;height:20px;background:#f5f6f9"></div>
<div style="position:absolute;left:0px;top:0px;width:11px;height:20px;background:linear-gradient(#e4e7ee,#dadfe8)"></div>
<div style="position:absolute;left:0px;top:0px;width:11px;height:1px;background:#eef0f4"></div>
<div style="position:absolute;left:11px;top:0px;width:160px;height:20px;background:#fff5e2"></div>
<div style="position:absolute;left:371px;top:0px;width:84px;height:20px;background:#fff5e2"></div>
<svg style="position:absolute;left:3px;top:6px;" width="5" height="9" viewBox="0 0 5 9"><path d="M0.4 0.4 L4.6 4.5 L0.4 8.6 Z" fill="#16203c"/></svg>
<span style="position:absolute;left:12.46px;top:4px;height:14px;line-height:14px;font-size:12px;color:#16203c;white-space:pre;display:inline-block;transform-origin:0 0;transform:scaleX(1.0426);">Magazyn</span>
<span style="position:absolute;left:96.0px;top:4px;height:14px;line-height:14px;font-size:12px;color:#16203c;white-space:pre;display:inline-block;transform-origin:0 0;transform:scaleX(1.0634);">Asortyment</span>
<span style="position:absolute;left:173.96px;top:4px;height:14px;line-height:14px;font-size:12px;color:#16203c;white-space:pre;display:inline-block;transform-origin:0 0;transform:scaleX(1.0826);">Odbiorcy asortymentu-&gt;Edycja ...</span>
<span style="position:absolute;left:371.51px;top:4px;height:12px;line-height:12px;font-size:11px;color:#16203c;white-space:pre;display:inline-block;transform-origin:0 0;transform:scaleX(0.9853);">Pole definiowalne</span>
<div style="position:absolute;left:0px;top:20px;width:455px;height:20px;background:#edf5ec"></div>
<div style="position:absolute;left:0px;top:20px;width:11px;height:20px;background:linear-gradient(#e4e7ee,#dadfe8)"></div>
<div style="position:absolute;left:0px;top:20px;width:11px;height:1px;background:#eef0f4"></div>
<div style="position:absolute;left:371px;top:20px;width:84px;height:20px;background:#ffffc4"></div>
<span style="position:absolute;left:12.46px;top:24px;height:14px;line-height:14px;font-size:12px;color:#16203c;white-space:pre;display:inline-block;transform-origin:0 0;transform:scaleX(1.0426);">Magazyn</span>
<span style="position:absolute;left:96.0px;top:24px;height:14px;line-height:14px;font-size:12px;color:#16203c;white-space:pre;display:inline-block;transform-origin:0 0;transform:scaleX(1.0634);">Asortyment</span>
<span style="position:absolute;left:173.96px;top:24px;height:14px;line-height:14px;font-size:12px;color:#16203c;white-space:pre;display:inline-block;transform-origin:0 0;transform:scaleX(1.0826);">Odbiorcy asortymentu-&gt;Edycja ...</span>
<span style="position:absolute;left:371.51px;top:24px;height:12px;line-height:12px;font-size:11px;color:#16203c;white-space:pre;display:inline-block;transform-origin:0 0;transform:scaleX(0.9853);">Pole definiowalne</span>
<div style="position:absolute;left:0px;top:40px;width:455px;height:20px;background:#f5f6f9"></div>
<div style="position:absolute;left:0px;top:40px;width:11px;height:20px;background:linear-gradient(#e4e7ee,#dadfe8)"></div>
<div style="position:absolute;left:0px;top:40px;width:11px;height:1px;background:#eef0f4"></div>
<div style="position:absolute;left:371px;top:40px;width:84px;height:20px;background:#ffffc4"></div>
<span style="position:absolute;left:12.46px;top:44px;height:14px;line-height:14px;font-size:12px;color:#16203c;white-space:pre;display:inline-block;transform-origin:0 0;transform:scaleX(1.0426);">Magazyn</span>
<span style="position:absolute;left:96.0px;top:44px;height:14px;line-height:14px;font-size:12px;color:#16203c;white-space:pre;display:inline-block;transform-origin:0 0;transform:scaleX(1.0634);">Asortyment</span>
<span style="position:absolute;left:173.96px;top:44px;height:14px;line-height:14px;font-size:12px;color:#16203c;white-space:pre;display:inline-block;transform-origin:0 0;transform:scaleX(1.0826);">Odbiorcy asortymentu-&gt;Edycja ...</span>
<span style="position:absolute;left:371.51px;top:44px;height:12px;line-height:12px;font-size:11px;color:#16203c;white-space:pre;display:inline-block;transform-origin:0 0;transform:scaleX(0.9853);">Pole definiowalne</span>
<div style="position:absolute;left:0px;top:60px;width:455px;height:20px;background:#edf5ec"></div>
<div style="position:absolute;left:0px;top:60px;width:11px;height:20px;background:linear-gradient(#e4e7ee,#dadfe8)"></div>
<div style="position:absolute;left:0px;top:60px;width:11px;height:1px;background:#eef0f4"></div>
<div style="position:absolute;left:371px;top:60px;width:84px;height:20px;background:#ffffc4"></div>
<span style="position:absolute;left:12.46px;top:64px;height:14px;line-height:14px;font-size:12px;color:#16203c;white-space:pre;display:inline-block;transform-origin:0 0;transform:scaleX(1.0426);">Magazyn</span>
<span style="position:absolute;left:96.0px;top:64px;height:14px;line-height:14px;font-size:12px;color:#16203c;white-space:pre;display:inline-block;transform-origin:0 0;transform:scaleX(1.0634);">Asortyment</span>
<span style="position:absolute;left:173.96px;top:64px;height:14px;line-height:14px;font-size:12px;color:#16203c;white-space:pre;display:inline-block;transform-origin:0 0;transform:scaleX(1.0826);">Odbiorcy asortymentu-&gt;Edycja ...</span>
<span style="position:absolute;left:371.51px;top:64px;height:12px;line-height:12px;font-size:11px;color:#16203c;white-space:pre;display:inline-block;transform-origin:0 0;transform:scaleX(0.9853);">Pole definiowalne</span>
<div style="position:absolute;left:0px;top:80px;width:455px;height:20px;background:#f5f6f9"></div>
<div style="position:absolute;left:0px;top:80px;width:11px;height:20px;background:linear-gradient(#e4e7ee,#dadfe8)"></div>
<div style="position:absolute;left:0px;top:80px;width:11px;height:1px;background:#eef0f4"></div>
<div style="position:absolute;left:371px;top:80px;width:84px;height:20px;background:#ffffc4"></div>
<span style="position:absolute;left:12.46px;top:84px;height:14px;line-height:14px;font-size:12px;color:#16203c;white-space:pre;display:inline-block;transform-origin:0 0;transform:scaleX(1.0426);">Magazyn</span>
<span style="position:absolute;left:96.0px;top:84px;height:14px;line-height:14px;font-size:12px;color:#16203c;white-space:pre;display:inline-block;transform-origin:0 0;transform:scaleX(1.0634);">Asortyment</span>
<span style="position:absolute;left:173.96px;top:84px;height:14px;line-height:14px;font-size:12px;color:#16203c;white-space:pre;display:inline-block;transform-origin:0 0;transform:scaleX(1.0826);">Odbiorcy asortymentu-&gt;Edycja ...</span>
<span style="position:absolute;left:371.51px;top:84px;height:12px;line-height:12px;font-size:11px;color:#16203c;white-space:pre;display:inline-block;transform-origin:0 0;transform:scaleX(0.9853);">Pole definiowalne</span>
<div style="position:absolute;left:0px;top:100px;width:455px;height:20px;background:#edf5ec"></div>
<div style="position:absolute;left:0px;top:100px;width:11px;height:20px;background:linear-gradient(#e4e7ee,#dadfe8)"></div>
<div style="position:absolute;left:0px;top:100px;width:11px;height:1px;background:#eef0f4"></div>
<div style="position:absolute;left:371px;top:100px;width:84px;height:20px;background:#ffffc4"></div>
<span style="position:absolute;left:12.46px;top:104px;height:14px;line-height:14px;font-size:12px;color:#16203c;white-space:pre;display:inline-block;transform-origin:0 0;transform:scaleX(1.0426);">Magazyn</span>
<span style="position:absolute;left:96.0px;top:104px;height:14px;line-height:14px;font-size:12px;color:#16203c;white-space:pre;display:inline-block;transform-origin:0 0;transform:scaleX(1.0634);">Asortyment</span>
<span style="position:absolute;left:173.42px;top:104px;height:14px;line-height:14px;font-size:12px;color:#16203c;white-space:pre;display:inline-block;transform-origin:0 0;transform:scaleX(1.0837);">Dostawcy asortymentu-&gt;Edycja...</span>
<span style="position:absolute;left:371.51px;top:104px;height:12px;line-height:12px;font-size:11px;color:#16203c;white-space:pre;display:inline-block;transform-origin:0 0;transform:scaleX(0.9853);">Pole definiowalne</span>
<div style="position:absolute;left:0px;top:120px;width:455px;height:20px;background:#f5f6f9"></div>
<div style="position:absolute;left:0px;top:120px;width:11px;height:20px;background:linear-gradient(#e4e7ee,#dadfe8)"></div>
<div style="position:absolute;left:0px;top:120px;width:11px;height:1px;background:#eef0f4"></div>
<div style="position:absolute;left:371px;top:120px;width:84px;height:20px;background:#ffffc4"></div>
<span style="position:absolute;left:12.46px;top:124px;height:14px;line-height:14px;font-size:12px;color:#16203c;white-space:pre;display:inline-block;transform-origin:0 0;transform:scaleX(1.0426);">Magazyn</span>
<span style="position:absolute;left:96.0px;top:124px;height:14px;line-height:14px;font-size:12px;color:#16203c;white-space:pre;display:inline-block;transform-origin:0 0;transform:scaleX(1.0634);">Asortyment</span>
<span style="position:absolute;left:173.42px;top:124px;height:14px;line-height:14px;font-size:12px;color:#16203c;white-space:pre;display:inline-block;transform-origin:0 0;transform:scaleX(1.0837);">Dostawcy asortymentu-&gt;Edycja...</span>
<span style="position:absolute;left:371.51px;top:124px;height:12px;line-height:12px;font-size:11px;color:#16203c;white-space:pre;display:inline-block;transform-origin:0 0;transform:scaleX(0.9853);">Pole definiowalne</span>
<div style="position:absolute;left:0px;top:140px;width:455px;height:20px;background:#edf5ec"></div>
<div style="position:absolute;left:0px;top:140px;width:11px;height:20px;background:linear-gradient(#e4e7ee,#dadfe8)"></div>
<div style="position:absolute;left:0px;top:140px;width:11px;height:1px;background:#eef0f4"></div>
<div style="position:absolute;left:371px;top:140px;width:84px;height:20px;background:#ffffc4"></div>
<span style="position:absolute;left:12.46px;top:144px;height:14px;line-height:14px;font-size:12px;color:#16203c;white-space:pre;display:inline-block;transform-origin:0 0;transform:scaleX(1.0426);">Magazyn</span>
<span style="position:absolute;left:96.0px;top:144px;height:14px;line-height:14px;font-size:12px;color:#16203c;white-space:pre;display:inline-block;transform-origin:0 0;transform:scaleX(1.0634);">Asortyment</span>
<span style="position:absolute;left:173.42px;top:144px;height:14px;line-height:14px;font-size:12px;color:#16203c;white-space:pre;display:inline-block;transform-origin:0 0;transform:scaleX(1.0837);">Dostawcy asortymentu-&gt;Edycja...</span>
<span style="position:absolute;left:371.51px;top:144px;height:12px;line-height:12px;font-size:11px;color:#16203c;white-space:pre;display:inline-block;transform-origin:0 0;transform:scaleX(0.9853);">Pole definiowalne</span>
<div style="position:absolute;left:0px;top:160px;width:455px;height:20px;background:#f5f6f9"></div>
<div style="position:absolute;left:0px;top:160px;width:11px;height:20px;background:linear-gradient(#e4e7ee,#dadfe8)"></div>
<div style="position:absolute;left:0px;top:160px;width:11px;height:1px;background:#eef0f4"></div>
<div style="position:absolute;left:371px;top:160px;width:84px;height:20px;background:#ffffc4"></div>
<span style="position:absolute;left:12.46px;top:164px;height:14px;line-height:14px;font-size:12px;color:#16203c;white-space:pre;display:inline-block;transform-origin:0 0;transform:scaleX(1.0426);">Magazyn</span>
<span style="position:absolute;left:96.0px;top:164px;height:14px;line-height:14px;font-size:12px;color:#16203c;white-space:pre;display:inline-block;transform-origin:0 0;transform:scaleX(1.0634);">Asortyment</span>
<span style="position:absolute;left:173.42px;top:164px;height:14px;line-height:14px;font-size:12px;color:#16203c;white-space:pre;display:inline-block;transform-origin:0 0;transform:scaleX(1.0837);">Dostawcy asortymentu-&gt;Edycja...</span>
<span style="position:absolute;left:371.51px;top:164px;height:12px;line-height:12px;font-size:11px;color:#16203c;white-space:pre;display:inline-block;transform-origin:0 0;transform:scaleX(0.9853);">Pole definiowalne</span>
<div style="position:absolute;left:0px;top:180px;width:455px;height:20px;background:#edf5ec"></div>
<div style="position:absolute;left:0px;top:180px;width:11px;height:20px;background:linear-gradient(#e4e7ee,#dadfe8)"></div>
<div style="position:absolute;left:0px;top:180px;width:11px;height:1px;background:#eef0f4"></div>
<div style="position:absolute;left:371px;top:180px;width:84px;height:20px;background:#ffffc4"></div>
<span style="position:absolute;left:12.46px;top:184px;height:14px;line-height:14px;font-size:12px;color:#16203c;white-space:pre;display:inline-block;transform-origin:0 0;transform:scaleX(1.0426);">Magazyn</span>
<span style="position:absolute;left:96.0px;top:184px;height:14px;line-height:14px;font-size:12px;color:#16203c;white-space:pre;display:inline-block;transform-origin:0 0;transform:scaleX(1.0634);">Asortyment</span>
<span style="position:absolute;left:173.42px;top:184px;height:14px;line-height:14px;font-size:12px;color:#16203c;white-space:pre;display:inline-block;transform-origin:0 0;transform:scaleX(1.0837);">Dostawcy asortymentu-&gt;Edycja...</span>
<span style="position:absolute;left:371.51px;top:184px;height:12px;line-height:12px;font-size:11px;color:#16203c;white-space:pre;display:inline-block;transform-origin:0 0;transform:scaleX(0.9853);">Pole definiowalne</span>
<div style="position:absolute;left:0px;top:200px;width:455px;height:20px;background:#f5f6f9"></div>
<div style="position:absolute;left:0px;top:200px;width:11px;height:20px;background:linear-gradient(#e4e7ee,#dadfe8)"></div>
<div style="position:absolute;left:0px;top:200px;width:11px;height:1px;background:#eef0f4"></div>
<div style="position:absolute;left:371px;top:200px;width:84px;height:20px;background:#ffffc4"></div>
<span style="position:absolute;left:12.45px;top:204px;height:14px;line-height:14px;font-size:12px;color:#16203c;white-space:pre;display:inline-block;transform-origin:0 0;transform:scaleX(1.0539);">Pracownicy</span>
<span style="position:absolute;left:94.95px;top:204px;height:14px;line-height:14px;font-size:12px;color:#16203c;white-space:pre;display:inline-block;transform-origin:0 0;transform:scaleX(1.0539);">Pracownicy</span>
<span style="position:absolute;left:173.4px;top:204px;height:14px;line-height:14px;font-size:12px;color:#16203c;white-space:pre;display:inline-block;transform-origin:0 0;transform:scaleX(1.0961);">Edycja pracownika-&gt;Informacje</span>
<span style="position:absolute;left:371.54px;top:204px;height:12px;line-height:12px;font-size:11px;color:#16203c;white-space:pre;display:inline-block;transform-origin:0 0;transform:scaleX(0.9628);">Pole niezdefiniow</span>
<div style="position:absolute;left:0px;top:220px;width:455px;height:20px;background:#edf5ec"></div>
<div style="position:absolute;left:0px;top:220px;width:11px;height:20px;background:linear-gradient(#e4e7ee,#dadfe8)"></div>
<div style="position:absolute;left:0px;top:220px;width:11px;height:1px;background:#eef0f4"></div>
<div style="position:absolute;left:371px;top:220px;width:84px;height:20px;background:#ffffc4"></div>
<span style="position:absolute;left:12.45px;top:224px;height:14px;line-height:14px;font-size:12px;color:#16203c;white-space:pre;display:inline-block;transform-origin:0 0;transform:scaleX(1.0539);">Pracownicy</span>
<span style="position:absolute;left:94.95px;top:224px;height:14px;line-height:14px;font-size:12px;color:#16203c;white-space:pre;display:inline-block;transform-origin:0 0;transform:scaleX(1.0539);">Pracownicy</span>
<span style="position:absolute;left:173.4px;top:224px;height:14px;line-height:14px;font-size:12px;color:#16203c;white-space:pre;display:inline-block;transform-origin:0 0;transform:scaleX(1.0961);">Edycja pracownika-&gt;Informacje</span>
<span style="position:absolute;left:371.54px;top:224px;height:12px;line-height:12px;font-size:11px;color:#16203c;white-space:pre;display:inline-block;transform-origin:0 0;transform:scaleX(0.9628);">Pole niezdefiniow</span>
<div style="position:absolute;left:0px;top:240px;width:455px;height:20px;background:#f5f6f9"></div>
<div style="position:absolute;left:0px;top:240px;width:11px;height:20px;background:linear-gradient(#e4e7ee,#dadfe8)"></div>
<div style="position:absolute;left:0px;top:240px;width:11px;height:1px;background:#eef0f4"></div>
<div style="position:absolute;left:371px;top:240px;width:84px;height:20px;background:#ffffc4"></div>
<span style="position:absolute;left:12.45px;top:244px;height:14px;line-height:14px;font-size:12px;color:#16203c;white-space:pre;display:inline-block;transform-origin:0 0;transform:scaleX(1.0539);">Pracownicy</span>
<span style="position:absolute;left:94.95px;top:244px;height:14px;line-height:14px;font-size:12px;color:#16203c;white-space:pre;display:inline-block;transform-origin:0 0;transform:scaleX(1.0539);">Pracownicy</span>
<span style="position:absolute;left:173.4px;top:244px;height:14px;line-height:14px;font-size:12px;color:#16203c;white-space:pre;display:inline-block;transform-origin:0 0;transform:scaleX(1.0961);">Edycja pracownika-&gt;Informacje</span>
<span style="position:absolute;left:371.54px;top:244px;height:12px;line-height:12px;font-size:11px;color:#16203c;white-space:pre;display:inline-block;transform-origin:0 0;transform:scaleX(0.9628);">Pole niezdefiniow</span>
<div style="position:absolute;left:0px;top:260px;width:455px;height:20px;background:#edf5ec"></div>
<div style="position:absolute;left:0px;top:260px;width:11px;height:20px;background:linear-gradient(#e4e7ee,#dadfe8)"></div>
<div style="position:absolute;left:0px;top:260px;width:11px;height:1px;background:#eef0f4"></div>
<div style="position:absolute;left:371px;top:260px;width:84px;height:20px;background:#ffffc4"></div>
<span style="position:absolute;left:12.45px;top:264px;height:14px;line-height:14px;font-size:12px;color:#16203c;white-space:pre;display:inline-block;transform-origin:0 0;transform:scaleX(1.0539);">Pracownicy</span>
<span style="position:absolute;left:94.95px;top:264px;height:14px;line-height:14px;font-size:12px;color:#16203c;white-space:pre;display:inline-block;transform-origin:0 0;transform:scaleX(1.0539);">Pracownicy</span>
<span style="position:absolute;left:173.4px;top:264px;height:14px;line-height:14px;font-size:12px;color:#16203c;white-space:pre;display:inline-block;transform-origin:0 0;transform:scaleX(1.0961);">Edycja pracownika-&gt;Informacje</span>
<span style="position:absolute;left:371.54px;top:264px;height:12px;line-height:12px;font-size:11px;color:#16203c;white-space:pre;display:inline-block;transform-origin:0 0;transform:scaleX(0.9628);">Pole niezdefiniow</span>
<div style="position:absolute;left:0px;top:280px;width:455px;height:20px;background:#f5f6f9"></div>
<div style="position:absolute;left:0px;top:280px;width:11px;height:20px;background:linear-gradient(#e4e7ee,#dadfe8)"></div>
<div style="position:absolute;left:0px;top:280px;width:11px;height:1px;background:#eef0f4"></div>
<div style="position:absolute;left:371px;top:280px;width:84px;height:20px;background:#ffffc4"></div>
<span style="position:absolute;left:12.45px;top:284px;height:14px;line-height:14px;font-size:12px;color:#16203c;white-space:pre;display:inline-block;transform-origin:0 0;transform:scaleX(1.0539);">Pracownicy</span>
<span style="position:absolute;left:94.95px;top:284px;height:14px;line-height:14px;font-size:12px;color:#16203c;white-space:pre;display:inline-block;transform-origin:0 0;transform:scaleX(1.0539);">Pracownicy</span>
<span style="position:absolute;left:173.4px;top:284px;height:14px;line-height:14px;font-size:12px;color:#16203c;white-space:pre;display:inline-block;transform-origin:0 0;transform:scaleX(1.0961);">Edycja pracownika-&gt;Informacje</span>
<span style="position:absolute;left:371.54px;top:284px;height:12px;line-height:12px;font-size:11px;color:#16203c;white-space:pre;display:inline-block;transform-origin:0 0;transform:scaleX(0.9628);">Pole niezdefiniow</span>
<div style="position:absolute;left:0px;top:300px;width:455px;height:20px;background:#edf5ec"></div>
<div style="position:absolute;left:0px;top:300px;width:11px;height:20px;background:linear-gradient(#e4e7ee,#dadfe8)"></div>
<div style="position:absolute;left:0px;top:300px;width:11px;height:1px;background:#eef0f4"></div>
<div style="position:absolute;left:371px;top:300px;width:84px;height:20px;background:#ffffc4"></div>
<span style="position:absolute;left:12.45px;top:304px;height:14px;line-height:14px;font-size:12px;color:#16203c;white-space:pre;display:inline-block;transform-origin:0 0;transform:scaleX(1.0539);">Pracownicy</span>
<span style="position:absolute;left:94.95px;top:304px;height:14px;line-height:14px;font-size:12px;color:#16203c;white-space:pre;display:inline-block;transform-origin:0 0;transform:scaleX(1.0539);">Pracownicy</span>
<span style="position:absolute;left:173.4px;top:304px;height:14px;line-height:14px;font-size:12px;color:#16203c;white-space:pre;display:inline-block;transform-origin:0 0;transform:scaleX(1.0961);">Edycja pracownika-&gt;Informacje</span>
<span style="position:absolute;left:371.54px;top:304px;height:12px;line-height:12px;font-size:11px;color:#16203c;white-space:pre;display:inline-block;transform-origin:0 0;transform:scaleX(0.9628);">Pole niezdefiniow</span>
<div style="position:absolute;left:0px;top:320px;width:455px;height:20px;background:#f5f6f9"></div>
<div style="position:absolute;left:0px;top:320px;width:11px;height:20px;background:linear-gradient(#e4e7ee,#dadfe8)"></div>
<div style="position:absolute;left:0px;top:320px;width:11px;height:1px;background:#eef0f4"></div>
<div style="position:absolute;left:371px;top:320px;width:84px;height:20px;background:#ffffc4"></div>
<span style="position:absolute;left:12.45px;top:324px;height:14px;line-height:14px;font-size:12px;color:#16203c;white-space:pre;display:inline-block;transform-origin:0 0;transform:scaleX(1.0539);">Pracownicy</span>
<span style="position:absolute;left:94.95px;top:324px;height:14px;line-height:14px;font-size:12px;color:#16203c;white-space:pre;display:inline-block;transform-origin:0 0;transform:scaleX(1.0539);">Pracownicy</span>
<span style="position:absolute;left:173.4px;top:324px;height:14px;line-height:14px;font-size:12px;color:#16203c;white-space:pre;display:inline-block;transform-origin:0 0;transform:scaleX(1.0961);">Edycja pracownika-&gt;Informacje</span>
<span style="position:absolute;left:371.54px;top:324px;height:12px;line-height:12px;font-size:11px;color:#16203c;white-space:pre;display:inline-block;transform-origin:0 0;transform:scaleX(0.9628);">Pole niezdefiniow</span>
<div style="position:absolute;left:0px;top:340px;width:455px;height:20px;background:#edf5ec"></div>
<div style="position:absolute;left:0px;top:340px;width:11px;height:20px;background:linear-gradient(#e4e7ee,#dadfe8)"></div>
<div style="position:absolute;left:0px;top:340px;width:11px;height:1px;background:#eef0f4"></div>
<div style="position:absolute;left:371px;top:340px;width:84px;height:20px;background:#ffffc4"></div>
<span style="position:absolute;left:12.45px;top:344px;height:14px;line-height:14px;font-size:12px;color:#16203c;white-space:pre;display:inline-block;transform-origin:0 0;transform:scaleX(1.0539);">Pracownicy</span>
<span style="position:absolute;left:94.95px;top:344px;height:14px;line-height:14px;font-size:12px;color:#16203c;white-space:pre;display:inline-block;transform-origin:0 0;transform:scaleX(1.0539);">Pracownicy</span>
<span style="position:absolute;left:173.4px;top:344px;height:14px;line-height:14px;font-size:12px;color:#16203c;white-space:pre;display:inline-block;transform-origin:0 0;transform:scaleX(1.0961);">Edycja pracownika-&gt;Informacje</span>
<span style="position:absolute;left:371.54px;top:344px;height:12px;line-height:12px;font-size:11px;color:#16203c;white-space:pre;display:inline-block;transform-origin:0 0;transform:scaleX(0.9628);">Pole niezdefiniow</span>
<div style="position:absolute;left:0px;top:360px;width:455px;height:20px;background:#f5f6f9"></div>
<div style="position:absolute;left:0px;top:360px;width:11px;height:20px;background:linear-gradient(#e4e7ee,#dadfe8)"></div>
<div style="position:absolute;left:0px;top:360px;width:11px;height:1px;background:#eef0f4"></div>
<div style="position:absolute;left:371px;top:360px;width:84px;height:20px;background:#ffffc4"></div>
<span style="position:absolute;left:12.45px;top:364px;height:14px;line-height:14px;font-size:12px;color:#16203c;white-space:pre;display:inline-block;transform-origin:0 0;transform:scaleX(1.0539);">Pracownicy</span>
<span style="position:absolute;left:94.95px;top:364px;height:14px;line-height:14px;font-size:12px;color:#16203c;white-space:pre;display:inline-block;transform-origin:0 0;transform:scaleX(1.0539);">Pracownicy</span>
<span style="position:absolute;left:173.4px;top:364px;height:14px;line-height:14px;font-size:12px;color:#16203c;white-space:pre;display:inline-block;transform-origin:0 0;transform:scaleX(1.0961);">Edycja pracownika-&gt;Informacje</span>
<span style="position:absolute;left:371.54px;top:364px;height:12px;line-height:12px;font-size:11px;color:#16203c;white-space:pre;display:inline-block;transform-origin:0 0;transform:scaleX(0.9628);">Pole niezdefiniow</span>
<div style="position:absolute;left:0px;top:380px;width:455px;height:20px;background:#edf5ec"></div>
<div style="position:absolute;left:0px;top:380px;width:11px;height:20px;background:linear-gradient(#e4e7ee,#dadfe8)"></div>
<div style="position:absolute;left:0px;top:380px;width:11px;height:1px;background:#eef0f4"></div>
<div style="position:absolute;left:371px;top:380px;width:84px;height:20px;background:#ffffc4"></div>
<span style="position:absolute;left:12.45px;top:384px;height:14px;line-height:14px;font-size:12px;color:#16203c;white-space:pre;display:inline-block;transform-origin:0 0;transform:scaleX(1.0539);">Pracownicy</span>
<span style="position:absolute;left:94.95px;top:384px;height:14px;line-height:14px;font-size:12px;color:#16203c;white-space:pre;display:inline-block;transform-origin:0 0;transform:scaleX(1.0539);">Pracownicy</span>
<span style="position:absolute;left:173.4px;top:384px;height:14px;line-height:14px;font-size:12px;color:#16203c;white-space:pre;display:inline-block;transform-origin:0 0;transform:scaleX(1.0961);">Edycja pracownika-&gt;Informacje</span>
<span style="position:absolute;left:371.54px;top:384px;height:12px;line-height:12px;font-size:11px;color:#16203c;white-space:pre;display:inline-block;transform-origin:0 0;transform:scaleX(0.9628);">Pole niezdefiniow</span>
<div style="position:absolute;left:0px;top:400px;width:455px;height:20px;background:#f5f6f9"></div>
<div style="position:absolute;left:0px;top:400px;width:11px;height:20px;background:linear-gradient(#e4e7ee,#dadfe8)"></div>
<div style="position:absolute;left:0px;top:400px;width:11px;height:1px;background:#eef0f4"></div>
<div style="position:absolute;left:371px;top:400px;width:84px;height:20px;background:#ffffc4"></div>
<span style="position:absolute;left:12.45px;top:404px;height:14px;line-height:14px;font-size:12px;color:#16203c;white-space:pre;display:inline-block;transform-origin:0 0;transform:scaleX(1.0539);">Pracownicy</span>
<span style="position:absolute;left:94.95px;top:404px;height:14px;line-height:14px;font-size:12px;color:#16203c;white-space:pre;display:inline-block;transform-origin:0 0;transform:scaleX(1.0539);">Pracownicy</span>
<span style="position:absolute;left:173.4px;top:404px;height:14px;line-height:14px;font-size:12px;color:#16203c;white-space:pre;display:inline-block;transform-origin:0 0;transform:scaleX(1.0961);">Edycja pracownika-&gt;Informacje</span>
<span style="position:absolute;left:371.54px;top:404px;height:12px;line-height:12px;font-size:11px;color:#16203c;white-space:pre;display:inline-block;transform-origin:0 0;transform:scaleX(0.9628);">Pole niezdefiniow</span>
<div style="position:absolute;left:0px;top:420px;width:455px;height:20px;background:#edf5ec"></div>
<div style="position:absolute;left:0px;top:420px;width:11px;height:20px;background:linear-gradient(#e4e7ee,#dadfe8)"></div>
<div style="position:absolute;left:0px;top:420px;width:11px;height:1px;background:#eef0f4"></div>
<div style="position:absolute;left:371px;top:420px;width:84px;height:20px;background:#ffffc4"></div>
<span style="position:absolute;left:12.45px;top:424px;height:14px;line-height:14px;font-size:12px;color:#16203c;white-space:pre;display:inline-block;transform-origin:0 0;transform:scaleX(1.0539);">Pracownicy</span>
<span style="position:absolute;left:94.95px;top:424px;height:14px;line-height:14px;font-size:12px;color:#16203c;white-space:pre;display:inline-block;transform-origin:0 0;transform:scaleX(1.0539);">Pracownicy</span>
<span style="position:absolute;left:173.4px;top:424px;height:14px;line-height:14px;font-size:12px;color:#16203c;white-space:pre;display:inline-block;transform-origin:0 0;transform:scaleX(1.0961);">Edycja pracownika-&gt;Informacje</span>
<span style="position:absolute;left:371.54px;top:424px;height:12px;line-height:12px;font-size:11px;color:#16203c;white-space:pre;display:inline-block;transform-origin:0 0;transform:scaleX(0.9628);">Pole niezdefiniow</span>
<div style="position:absolute;left:0px;top:440px;width:455px;height:20px;background:#f5f6f9"></div>
<div style="position:absolute;left:0px;top:440px;width:11px;height:20px;background:linear-gradient(#e4e7ee,#dadfe8)"></div>
<div style="position:absolute;left:0px;top:440px;width:11px;height:1px;background:#eef0f4"></div>
<div style="position:absolute;left:371px;top:440px;width:84px;height:20px;background:#ffffc4"></div>
<span style="position:absolute;left:12.45px;top:444px;height:14px;line-height:14px;font-size:12px;color:#16203c;white-space:pre;display:inline-block;transform-origin:0 0;transform:scaleX(1.0539);">Pracownicy</span>
<span style="position:absolute;left:94.95px;top:444px;height:14px;line-height:14px;font-size:12px;color:#16203c;white-space:pre;display:inline-block;transform-origin:0 0;transform:scaleX(1.0539);">Pracownicy</span>
<span style="position:absolute;left:173.4px;top:444px;height:14px;line-height:14px;font-size:12px;color:#16203c;white-space:pre;display:inline-block;transform-origin:0 0;transform:scaleX(1.0961);">Edycja pracownika-&gt;Informacje</span>
<span style="position:absolute;left:371.54px;top:444px;height:12px;line-height:12px;font-size:11px;color:#16203c;white-space:pre;display:inline-block;transform-origin:0 0;transform:scaleX(0.9628);">Pole niezdefiniow</span>
<div style="position:absolute;left:0px;top:460px;width:455px;height:20px;background:#edf5ec"></div>
<div style="position:absolute;left:0px;top:460px;width:11px;height:20px;background:linear-gradient(#e4e7ee,#dadfe8)"></div>
<div style="position:absolute;left:0px;top:460px;width:11px;height:1px;background:#eef0f4"></div>
<div style="position:absolute;left:371px;top:460px;width:84px;height:20px;background:#ffffc4"></div>
<span style="position:absolute;left:12.45px;top:464px;height:14px;line-height:14px;font-size:12px;color:#16203c;white-space:pre;display:inline-block;transform-origin:0 0;transform:scaleX(1.0539);">Pracownicy</span>
<span style="position:absolute;left:94.95px;top:464px;height:14px;line-height:14px;font-size:12px;color:#16203c;white-space:pre;display:inline-block;transform-origin:0 0;transform:scaleX(1.0539);">Pracownicy</span>
<span style="position:absolute;left:173.4px;top:464px;height:14px;line-height:14px;font-size:12px;color:#16203c;white-space:pre;display:inline-block;transform-origin:0 0;transform:scaleX(1.0961);">Edycja pracownika-&gt;Informacje</span>
<span style="position:absolute;left:371.54px;top:464px;height:12px;line-height:12px;font-size:11px;color:#16203c;white-space:pre;display:inline-block;transform-origin:0 0;transform:scaleX(0.9628);">Pole niezdefiniow</span>
<div style="position:absolute;left:0px;top:480px;width:455px;height:20px;background:#f5f6f9"></div>
<div style="position:absolute;left:0px;top:480px;width:11px;height:20px;background:linear-gradient(#e4e7ee,#dadfe8)"></div>
<div style="position:absolute;left:0px;top:480px;width:11px;height:1px;background:#eef0f4"></div>
<div style="position:absolute;left:371px;top:480px;width:84px;height:20px;background:#ffffc4"></div>
<span style="position:absolute;left:12.45px;top:484px;height:14px;line-height:14px;font-size:12px;color:#16203c;white-space:pre;display:inline-block;transform-origin:0 0;transform:scaleX(1.0539);">Pracownicy</span>
<span style="position:absolute;left:94.95px;top:484px;height:14px;line-height:14px;font-size:12px;color:#16203c;white-space:pre;display:inline-block;transform-origin:0 0;transform:scaleX(1.0539);">Pracownicy</span>
<span style="position:absolute;left:173.4px;top:484px;height:14px;line-height:14px;font-size:12px;color:#16203c;white-space:pre;display:inline-block;transform-origin:0 0;transform:scaleX(1.0961);">Edycja pracownika-&gt;Informacje</span>
<span style="position:absolute;left:371.54px;top:484px;height:12px;line-height:12px;font-size:11px;color:#16203c;white-space:pre;display:inline-block;transform-origin:0 0;transform:scaleX(0.9628);">Pole niezdefiniow</span>
</div>
<div style="position:absolute;left:1133px;top:145px;width:17px;height:570px;background:linear-gradient(90deg,#e4e6eb,#eff0f3 50%,#e6e8ed)"></div>
<svg style="position:absolute;left:1137px;top:151px;" width="9" height="5" viewBox="0 0 9 5"><path d="M0.5 4.5 L4.5 0.5 L8.5 4.5 Z" fill="#8f95a3"/></svg>
<svg style="position:absolute;left:1137px;top:703px;" width="9" height="5" viewBox="0 0 9 5"><path d="M0.5 0.5 L8.5 0.5 L4.5 4.5 Z" fill="#8f95a3"/></svg>
<div style="position:absolute;left:1134px;top:162px;width:15px;height:65px;background:linear-gradient(90deg,#f3f4f7,#d3d8e2 60%,#e3e6ed);border:1px solid #9ba4b6;border-radius:3px;box-shadow:inset 1px 1px 0 #fff"></div>
<div style="position:absolute;left:1138px;top:191px;width:7px;height:1px;background:#6d7588"></div>
<div style="position:absolute;left:1138px;top:194px;width:7px;height:1px;background:#6d7588"></div>
<div style="position:absolute;left:1138px;top:197px;width:7px;height:1px;background:#6d7588"></div>
<div style="position:absolute;left:678px;top:715px;width:455px;height:17px;background:linear-gradient(#e4e6eb,#eff0f3 50%,#e6e8ed)"></div>
<div style="position:absolute;left:1133px;top:715px;width:17px;height:17px;background:#bcc8da"></div>
<svg style="position:absolute;left:683px;top:719px;" width="5" height="9" viewBox="0 0 5 9"><path d="M4.5 0.5 L0.5 4.5 L4.5 8.5 Z" fill="#8f95a3"/></svg>
<svg style="position:absolute;left:1123px;top:719px;" width="5" height="9" viewBox="0 0 5 9"><path d="M0.5 0.5 L4.5 4.5 L0.5 8.5 Z" fill="#8f95a3"/></svg>
<div style="position:absolute;left:694px;top:716px;width:407px;height:15px;background:linear-gradient(#f3f4f7,#d3d8e2 60%,#e3e6ed);border:1px solid #9ba4b6;border-radius:3px;box-shadow:inset 1px 1px 0 #fff"></div>
<div style="position:absolute;left:893.5px;top:720px;width:1.5px;height:7px;background:#656d80"></div>
<div style="position:absolute;left:896.5px;top:720px;width:1.5px;height:7px;background:#656d80"></div>
<div style="position:absolute;left:899.5px;top:720px;width:1.5px;height:7px;background:#656d80"></div>
<div style="position:absolute;left:1150px;top:83px;width:1px;height:649px;background:#93a0b8"></div>
<div style="position:absolute;left:678px;top:731px;width:472px;height:1px;background:#93a0b8"></div>
<div style="position:absolute;left:8px;top:738px;width:1145px;height:17px;background:linear-gradient(#e9ecf1,#d9dde6)"></div>
<div style="position:absolute;left:343px;top:739px;width:1px;height:15px;background:rgba(255,255,255,.7)"></div>
<div style="position:absolute;left:342px;top:739px;width:1px;height:15px;background:rgba(170,178,196,.45)"></div>
<div style="position:absolute;left:676px;top:739px;width:1px;height:15px;background:rgba(255,255,255,.7)"></div>
<div style="position:absolute;left:675px;top:739px;width:1px;height:15px;background:rgba(170,178,196,.45)"></div>
<div style="position:absolute;left:1013px;top:739px;width:1px;height:15px;background:rgba(255,255,255,.7)"></div>
<div style="position:absolute;left:1012px;top:739px;width:1px;height:15px;background:rgba(170,178,196,.45)"></div>
<span style="position:absolute;left:12.5px;top:741px;height:12px;line-height:12px;font-size:11px;color:#3d4a6c;white-space:pre;display:inline-block;transform-origin:0 0;transform:scaleX(0.9947);">Copyright © 2005-2024 RHO Software</span>
<span style="position:absolute;left:346.48px;top:741px;height:12px;line-height:12px;font-size:11px;color:#3d4a6c;white-space:pre;display:inline-block;transform-origin:0 0;transform:scaleX(1.0232);">Modus demo v.5.0.0.540</span>
<span style="position:absolute;left:680.93px;top:741px;height:12px;line-height:12px;font-size:11px;color:#3d4a6c;white-space:pre;display:inline-block;transform-origin:0 0;transform:scaleX(1.0719);">Nr licencji: 2223/111111111111111</span>
<span style="position:absolute;left:1037.99px;top:741px;height:12px;line-height:12px;font-size:11px;color:#3d4a6c;white-space:pre;display:inline-block;transform-origin:0 0;transform:scaleX(1.0256);">2024-12-18,  08:29:22</span>
<div style="position:absolute;left:0px;top:761px;width:1161px;height:1px;background:#55668e"></div>
<div style="position:absolute;left:0px;top:762px;width:1161px;height:1px;background:#1d2b4a"></div>
<div style="position:absolute;left:0px;top:0px;width:1px;height:763px;background:#1d2b4a"></div>
<div style="position:absolute;left:1160px;top:0px;width:1px;height:763px;background:#1d2b4a"></div>
</body></html>
